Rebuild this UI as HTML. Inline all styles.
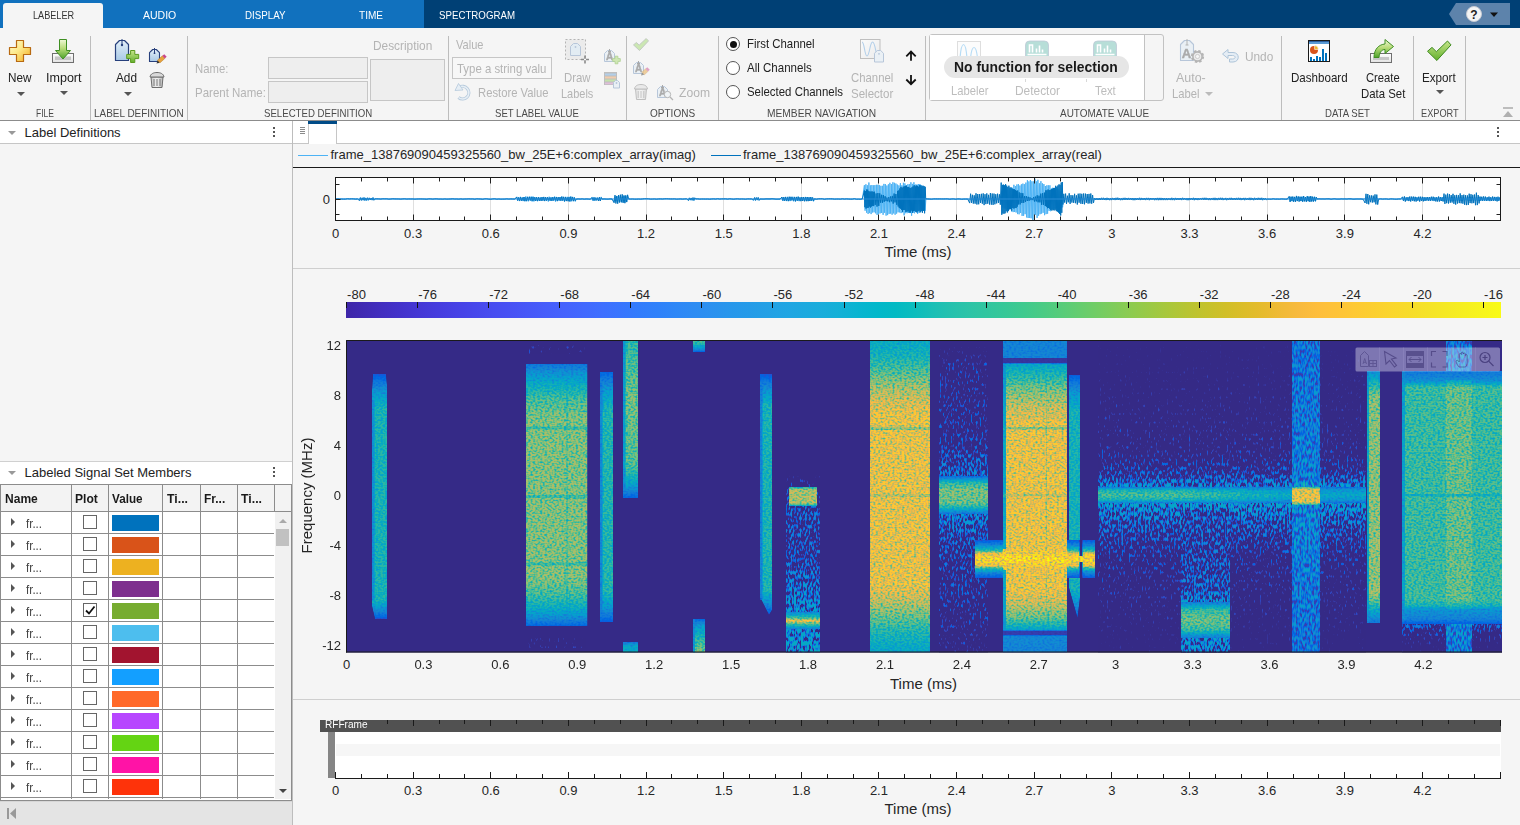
<!DOCTYPE html>
<html><head><meta charset="utf-8"><title>Signal Labeler</title>
<style>
html,body{margin:0;padding:0}
body{width:1520px;height:825px;overflow:hidden;position:relative;background:#f5f5f5;font-family:"Liberation Sans",sans-serif}
</style></head><body>
<div style="position:absolute;left:0px;top:0px;width:1520px;height:28px;background:#004075"></div>
<div style="position:absolute;left:0px;top:0px;width:424px;height:28px;background:#1171be"></div>
<div style="position:absolute;left:3px;top:3px;width:100px;height:25px;background:#f5f5f5;border-radius:3px 3px 0 0"></div>
<div style="position:absolute;top:8.0px;height:15px;line-height:15px;font-size:11px;color:#333;white-space:nowrap;left:32.6px;transform:scaleX(0.831);transform-origin:0 50%;">LABELER</div>
<div style="position:absolute;top:8.0px;height:15px;line-height:15px;font-size:11px;color:#fff;white-space:nowrap;left:142.7px;transform:scaleX(0.956);transform-origin:0 50%;">AUDIO</div>
<div style="position:absolute;top:8.0px;height:15px;line-height:15px;font-size:11px;color:#fff;white-space:nowrap;left:245.0px;transform:scaleX(0.886);transform-origin:0 50%;">DISPLAY</div>
<div style="position:absolute;top:8.0px;height:15px;line-height:15px;font-size:11px;color:#fff;white-space:nowrap;left:359.2px;transform:scaleX(0.913);transform-origin:0 50%;">TIME</div>
<div style="position:absolute;top:8.0px;height:15px;line-height:15px;font-size:11px;color:#fff;white-space:nowrap;left:439.0px;transform:scaleX(0.882);transform-origin:0 50%;">SPECTROGRAM</div>
<svg style="position:absolute;left:1446px;top:0" width="70" height="28" viewBox="1446 0 70 28"><path d="M1449 14 L1456 3 H1510 V25 H1456 Z" fill="#5d83ab"/><circle cx="1474" cy="14" r="7.5" fill="#f4f4f4" stroke="#c8ccd4" stroke-width="1"/><text x="1474" y="18.5" font-size="12" font-weight="bold" text-anchor="middle" fill="#222" font-family="Liberation Sans">?</text><path d="M1490 12.5 h8 l-4 4.5 z" fill="#111"/></svg>
<div style="position:absolute;left:0px;top:28px;width:1520px;height:92px;background:#f5f5f5"></div>
<div style="position:absolute;left:0px;top:120px;width:1520px;height:1px;background:#8c8c8c"></div>
<div style="position:absolute;left:90px;top:36px;width:1px;height:84px;background:#bdbdbd"></div>
<div style="position:absolute;left:187px;top:36px;width:1px;height:84px;background:#bdbdbd"></div>
<div style="position:absolute;left:448px;top:36px;width:1px;height:84px;background:#bdbdbd"></div>
<div style="position:absolute;left:626px;top:36px;width:1px;height:84px;background:#bdbdbd"></div>
<div style="position:absolute;left:718px;top:36px;width:1px;height:84px;background:#bdbdbd"></div>
<div style="position:absolute;left:925px;top:36px;width:1px;height:84px;background:#bdbdbd"></div>
<div style="position:absolute;left:1281px;top:36px;width:1px;height:84px;background:#bdbdbd"></div>
<div style="position:absolute;left:1413px;top:36px;width:1px;height:84px;background:#bdbdbd"></div>
<div style="position:absolute;left:1465px;top:36px;width:1px;height:84px;background:#bdbdbd"></div>
<div style="position:absolute;left:268px;top:57px;width:100px;height:22px;background:#eeeeee;border:1px solid #c6c6c6;box-sizing:border-box"></div>
<div style="position:absolute;left:268px;top:81px;width:100px;height:22px;background:#eeeeee;border:1px solid #c6c6c6;box-sizing:border-box"></div>
<div style="position:absolute;left:370px;top:59px;width:75px;height:42px;background:#eeeeee;border:1px solid #c6c6c6;box-sizing:border-box"></div>
<div style="position:absolute;left:452px;top:57px;width:100px;height:22px;background:#f7f7f7;border:1px solid #c6c6c6;box-sizing:border-box"></div>
<div style="position:absolute;top:106.0px;height:15px;line-height:15px;font-size:11px;color:#4a4a4a;white-space:nowrap;left:36.0px;transform:scaleX(0.774);transform-origin:0 50%;">FILE</div>
<div style="position:absolute;top:106.0px;height:15px;line-height:15px;font-size:11px;color:#4a4a4a;white-space:nowrap;left:94.2px;transform:scaleX(0.905);transform-origin:0 50%;">LABEL DEFINITION</div>
<div style="position:absolute;top:106.0px;height:15px;line-height:15px;font-size:11px;color:#4a4a4a;white-space:nowrap;left:263.8px;transform:scaleX(0.876);transform-origin:0 50%;">SELECTED DEFINITION</div>
<div style="position:absolute;top:106.0px;height:15px;line-height:15px;font-size:11px;color:#4a4a4a;white-space:nowrap;left:495.3px;transform:scaleX(0.870);transform-origin:0 50%;">SET LABEL VALUE</div>
<div style="position:absolute;top:106.0px;height:15px;line-height:15px;font-size:11px;color:#4a4a4a;white-space:nowrap;left:649.6px;transform:scaleX(0.911);transform-origin:0 50%;">OPTIONS</div>
<div style="position:absolute;top:106.0px;height:15px;line-height:15px;font-size:11px;color:#4a4a4a;white-space:nowrap;left:767.3px;transform:scaleX(0.929);transform-origin:0 50%;">MEMBER NAVIGATION</div>
<div style="position:absolute;top:106.0px;height:15px;line-height:15px;font-size:11px;color:#4a4a4a;white-space:nowrap;left:1059.5px;transform:scaleX(0.905);transform-origin:0 50%;">AUTOMATE VALUE</div>
<div style="position:absolute;top:106.0px;height:15px;line-height:15px;font-size:11px;color:#4a4a4a;white-space:nowrap;left:1325.0px;transform:scaleX(0.872);transform-origin:0 50%;">DATA SET</div>
<div style="position:absolute;top:106.0px;height:15px;line-height:15px;font-size:11px;color:#4a4a4a;white-space:nowrap;left:1420.5px;transform:scaleX(0.837);transform-origin:0 50%;">EXPORT</div>
<div style="position:absolute;top:68.7px;height:17px;line-height:17px;font-size:13px;color:#222;white-space:nowrap;left:8.3px;transform:scaleX(0.903);transform-origin:0 50%;">New</div>
<div style="position:absolute;top:68.7px;height:17px;line-height:17px;font-size:13px;color:#222;white-space:nowrap;left:45.5px;transform:scaleX(0.964);transform-origin:0 50%;">Import</div>
<div style="position:absolute;top:68.7px;height:17px;line-height:17px;font-size:13px;color:#222;white-space:nowrap;left:116.0px;transform:scaleX(0.907);transform-origin:0 50%;">Add</div>
<div style="position:absolute;top:35.2px;height:17px;line-height:17px;font-size:13px;color:#222;white-space:nowrap;left:747.0px;transform:scaleX(0.875);transform-origin:0 50%;">First Channel</div>
<div style="position:absolute;top:59.2px;height:17px;line-height:17px;font-size:13px;color:#222;white-space:nowrap;left:747.0px;transform:scaleX(0.887);transform-origin:0 50%;">All Channels</div>
<div style="position:absolute;top:83.2px;height:17px;line-height:17px;font-size:13px;color:#222;white-space:nowrap;left:747.0px;transform:scaleX(0.879);transform-origin:0 50%;">Selected Channels</div>
<div style="position:absolute;top:68.7px;height:17px;line-height:17px;font-size:13px;color:#222;white-space:nowrap;left:1290.8px;transform:scaleX(0.891);transform-origin:0 50%;">Dashboard</div>
<div style="position:absolute;top:68.7px;height:17px;line-height:17px;font-size:13px;color:#222;white-space:nowrap;left:1365.6px;transform:scaleX(0.863);transform-origin:0 50%;">Create</div>
<div style="position:absolute;top:84.7px;height:17px;line-height:17px;font-size:13px;color:#222;white-space:nowrap;left:1360.7px;transform:scaleX(0.876);transform-origin:0 50%;">Data Set</div>
<div style="position:absolute;top:69.2px;height:17px;line-height:17px;font-size:13px;color:#222;white-space:nowrap;left:1422.3px;transform:scaleX(0.897);transform-origin:0 50%;">Export</div>
<div style="position:absolute;top:59.7px;height:17px;line-height:17px;font-size:13px;color:#b4b4b4;white-space:nowrap;left:194.7px;transform:scaleX(0.870);transform-origin:0 50%;">Name:</div>
<div style="position:absolute;top:83.5px;height:17px;line-height:17px;font-size:13px;color:#b4b4b4;white-space:nowrap;left:194.7px;transform:scaleX(0.884);transform-origin:0 50%;">Parent Name:</div>
<div style="position:absolute;top:37.4px;height:17px;line-height:17px;font-size:13px;color:#b4b4b4;white-space:nowrap;left:373.4px;transform:scaleX(0.912);transform-origin:0 50%;">Description</div>
<div style="position:absolute;top:36.1px;height:17px;line-height:17px;font-size:13px;color:#b4b4b4;white-space:nowrap;left:455.5px;transform:scaleX(0.851);transform-origin:0 50%;">Value</div>
<div style="position:absolute;top:59.7px;height:17px;line-height:17px;font-size:13px;color:#b4b4b4;white-space:nowrap;left:457.4px;transform:scaleX(0.877);transform-origin:0 50%;">Type a string valu</div>
<div style="position:absolute;top:83.7px;height:17px;line-height:17px;font-size:13px;color:#b4b4b4;white-space:nowrap;left:477.5px;transform:scaleX(0.866);transform-origin:0 50%;">Restore Value</div>
<div style="position:absolute;top:68.7px;height:17px;line-height:17px;font-size:13px;color:#b4b4b4;white-space:nowrap;left:564.0px;transform:scaleX(0.877);transform-origin:0 50%;">Draw</div>
<div style="position:absolute;top:84.7px;height:17px;line-height:17px;font-size:13px;color:#b4b4b4;white-space:nowrap;left:561.0px;transform:scaleX(0.843);transform-origin:0 50%;">Labels</div>
<div style="position:absolute;top:83.7px;height:17px;line-height:17px;font-size:13px;color:#b4b4b4;white-space:nowrap;left:678.5px;transform:scaleX(0.933);transform-origin:0 50%;">Zoom</div>
<div style="position:absolute;top:68.7px;height:17px;line-height:17px;font-size:13px;color:#b4b4b4;white-space:nowrap;left:850.7px;transform:scaleX(0.873);transform-origin:0 50%;">Channel</div>
<div style="position:absolute;top:84.7px;height:17px;line-height:17px;font-size:13px;color:#b4b4b4;white-space:nowrap;left:850.7px;transform:scaleX(0.887);transform-origin:0 50%;">Selector</div>
<div style="position:absolute;top:69.2px;height:17px;line-height:17px;font-size:13px;color:#b4b4b4;white-space:nowrap;left:1176.0px;transform:scaleX(0.956);transform-origin:0 50%;">Auto-</div>
<div style="position:absolute;top:84.7px;height:17px;line-height:17px;font-size:13px;color:#b4b4b4;white-space:nowrap;left:1171.5px;transform:scaleX(0.864);transform-origin:0 50%;">Label</div>
<div style="position:absolute;top:48.3px;height:17px;line-height:17px;font-size:13px;color:#b4b4b4;white-space:nowrap;left:1244.7px;transform:scaleX(0.910);transform-origin:0 50%;">Undo</div>
<div style="position:absolute;left:17px;top:92px;width:0;height:0;border-left:4px solid transparent;border-right:4px solid transparent;border-top:4px solid #555"></div>
<div style="position:absolute;left:59.5px;top:91px;width:0;height:0;border-left:4px solid transparent;border-right:4px solid transparent;border-top:4px solid #555"></div>
<div style="position:absolute;left:124px;top:92px;width:0;height:0;border-left:4px solid transparent;border-right:4px solid transparent;border-top:4px solid #555"></div>
<div style="position:absolute;left:1435.5px;top:90px;width:0;height:0;border-left:4px solid transparent;border-right:4px solid transparent;border-top:4px solid #555"></div>
<div style="position:absolute;left:1205px;top:92px;width:0;height:0;border-left:4px solid transparent;border-right:4px solid transparent;border-top:4px solid #bbb"></div>
<div style="position:absolute;left:1150px;top:66px;width:0;height:0;border-left:4px solid transparent;border-right:4px solid transparent;border-top:4px solid #555"></div>
<div style="position:absolute;left:726px;top:37px;width:14px;height:14px;background:#fff;border:1px solid #555;border-radius:50%;box-sizing:border-box"></div>
<div style="position:absolute;left:729.5px;top:40.5px;width:7px;height:7px;background:#111;border-radius:50%"></div>
<div style="position:absolute;left:726px;top:61px;width:14px;height:14px;background:#fff;border:1px solid #555;border-radius:50%;box-sizing:border-box"></div>
<div style="position:absolute;left:726px;top:85px;width:14px;height:14px;background:#fff;border:1px solid #555;border-radius:50%;box-sizing:border-box"></div>
<div style="position:absolute;left:929px;top:34px;width:235px;height:67px;background:#f5f5f5;border:1px solid #c2c2c2;border-radius:3px;box-sizing:border-box"></div>
<div style="position:absolute;left:930px;top:35px;width:214px;height:65px;background:#fff;border-right:1px solid #c2c2c2"></div>
<div style="position:absolute;top:81.5px;height:17px;line-height:17px;font-size:13px;color:#bdbdbd;white-space:nowrap;left:950.8px;transform:scaleX(0.864);transform-origin:0 50%;">Labeler</div>
<div style="position:absolute;top:81.5px;height:17px;line-height:17px;font-size:13px;color:#bdbdbd;white-space:nowrap;left:1015.0px;transform:scaleX(0.916);transform-origin:0 50%;">Detector</div>
<div style="position:absolute;top:81.5px;height:17px;line-height:17px;font-size:13px;color:#bdbdbd;white-space:nowrap;left:1095.0px;transform:scaleX(0.868);transform-origin:0 50%;">Text</div>
<svg style="position:absolute;left:930px;top:35px" width="214" height="65" viewBox="930 35 214 65"><g opacity="0.55"><rect x="957.5" y="41.5" width="23" height="22" fill="#fbfbfb" stroke="#c4c4c4"/><path d="M960 58C961.5 40 965.5 40 967 58M970.5 58C972 44 976 44 977.5 58" fill="none" stroke="#7cc0ee" stroke-width="1.2"/></g><g opacity="0.75"><rect x="1025.5" y="41" width="23" height="23" rx="4" fill="#9fd3cc" stroke="#a9b7c9" stroke-width="0.8"/><path d="M1029.5 52.5V45H1032.5V52.5M1036.5 52.5V48.5M1039.5 52.5V45.5M1042.5 52.5V49.5M1027.5 54.5H1046.5" stroke="#fff" stroke-width="1.6" fill="none"/></g><g opacity="0.75"><rect x="1093.5" y="41" width="23" height="23" rx="4" fill="#9fd3cc" stroke="#a9b7c9" stroke-width="0.8"/><path d="M1097.5 52.5V45H1100.5V52.5M1104.5 52.5V48.5M1107.5 52.5V45.5M1110.5 52.5V49.5M1095.5 54.5H1114.5" stroke="#fff" stroke-width="1.6" fill="none"/></g><path d="M1025.5 79V82M1086.5 79V82" stroke="#d8d8d8" stroke-width="1"/></svg>
<div style="position:absolute;left:944px;top:56px;width:185px;height:22px;background:#e6e6e6;border-radius:11px"></div>
<div style="position:absolute;top:58.0px;height:18px;line-height:18px;font-size:14px;color:#1a1a1a;white-space:nowrap;font-weight:bold;left:954.2px;transform:scaleX(0.993);transform-origin:0 50%;">No function for selection</div>
<svg style="position:absolute;left:0;top:28px" width="1520" height="92" viewBox="0 28 1520 92"><defs><linearGradient id="gPlus" x1="0" y1="0" x2="1" y2="1"><stop offset="0" stop-color="#fffbd0"/><stop offset="0.45" stop-color="#fde98a"/><stop offset="1" stop-color="#f2a91c"/></linearGradient><linearGradient id="gArrow" x1="0" y1="0" x2="0" y2="1"><stop offset="0" stop-color="#f0f8d8"/><stop offset="0.45" stop-color="#b9dc7a"/><stop offset="1" stop-color="#4ea32a"/></linearGradient><linearGradient id="gTag" x1="0" y1="0" x2="0" y2="1"><stop offset="0" stop-color="#e2eff9"/><stop offset="1" stop-color="#a9c9e6"/></linearGradient><linearGradient id="gGreen" x1="0" y1="0" x2="0" y2="1"><stop offset="0" stop-color="#c6e58a"/><stop offset="1" stop-color="#63b02c"/></linearGradient><linearGradient id="gTrash" x1="0" y1="0" x2="1" y2="0"><stop offset="0" stop-color="#c9c9c9"/><stop offset="0.5" stop-color="#f2f2f2"/><stop offset="1" stop-color="#b5b5b5"/></linearGradient><linearGradient id="gTray" x1="0" y1="0" x2="0" y2="1"><stop offset="0" stop-color="#ffffff"/><stop offset="1" stop-color="#e2e2e2"/></linearGradient><linearGradient id="gBox" x1="0" y1="0" x2="1" y2="1"><stop offset="0" stop-color="#ffffff"/><stop offset="1" stop-color="#e6e6e6"/></linearGradient></defs><path d="M16.5 40.5H23.5V47.5H30.5V54.5H23.5V61.5H16.5V54.5H9.5V47.5H16.5Z" fill="url(#gPlus)" stroke="#b86a12" stroke-width="1.2" stroke-linejoin="round"/><rect x="52.5" y="53.5" width="21" height="9" fill="url(#gTray)" stroke="#6f6f6f" stroke-width="1"/><rect x="55" y="56.5" width="16" height="3.5" fill="#c6c6c6"/><path d="M59.5 39.5H66.5V50.5H70.5L63 59L55.5 50.5H59.5Z" fill="url(#gArrow)" stroke="#3f8f22" stroke-width="1" stroke-linejoin="round"/><path d="M115.5 60.5V44.5L119.5 40.5H124.5L128.5 44.5V60.5Z" fill="url(#gTag)" stroke="#27407c" stroke-width="1.2" stroke-linejoin="round"/><circle cx="122.0" cy="45.0" r="1.2" fill="#27407c"/><path d="M122.0 39.0V45.0" stroke="#27407c" stroke-width="1"/><path d="M130.6 50.5H134.79999999999998V54.4H138.7V58.6H134.79999999999998V62.5H130.6V58.6H126.69999999999999V54.4H130.6Z" fill="url(#gGreen)" stroke="#5a9a1e" stroke-width="1" stroke-linejoin="round"/><path d="M149.5 61.5V52.7L152.7 49.5H156.3L159.5 52.7V61.5Z" fill="url(#gTag)" stroke="#27407c" stroke-width="1.1" stroke-linejoin="round"/><circle cx="154.5" cy="53.2" r="0.9" fill="#27407c"/><path d="M154.5 48.0V53.2" stroke="#27407c" stroke-width="1"/><g transform="translate(156.5 63.5) rotate(-41.6335393365702)" opacity="1.0"><path d="M0 0L3 -1.8V1.8Z" fill="#3a3a3a"/><rect x="3" y="-1.8" width="6.5" height="3.6" fill="#e8a33d" stroke="#b9791f" stroke-width="0.5"/><rect x="9.5" y="-1.8" width="2.5" height="3.6" fill="#c9478a"/></g><g opacity="1.0"><path d="M151.0 77L152.0 87.5H162.0L163.0 77Z" fill="url(#gTrash)" stroke="#6e6e6e" stroke-width="1"/><path d="M154.0 79V86" stroke="#777" stroke-width="1"/><path d="M157.0 79V86" stroke="#777" stroke-width="1"/><path d="M160.0 79V86" stroke="#777" stroke-width="1"/><path d="M150.0 77C150.5 73.5,154.0 72.5,157.0 72.5C160.0 72.5,163.5 73.5,164.0 77Z" fill="#d9d9d9" stroke="#6e6e6e" stroke-width="1"/></g><g opacity="0.55"><path d="M459 87.5A6.3 6.3 0 1 1 458.5 97.5" fill="none" stroke="#7fa4c6" stroke-width="3.2"/><path d="M459 87.5A6.3 6.3 0 1 1 458.5 97.5" fill="none" stroke="#dbe9f5" stroke-width="1.6"/><path d="M455 90.5L458.5 83.5L463 90Z" fill="#dbe9f5" stroke="#7fa4c6" stroke-width="0.8"/></g><g opacity="0.6"><rect x="565.5" y="39.5" width="20" height="20" fill="#e6e6e6" stroke="#8a8a8a" stroke-width="1" stroke-dasharray="2 2"/><path d="M570.5 55.5V46.5L573.5 43.5H577.5L580.5 46.5V55.5Z" fill="#d7e7f3" stroke="#8fa8c8" stroke-width="1" stroke-linejoin="round"/><circle cx="575.5" cy="47.0" r="0.9" fill="#8fa8c8"/><path d="M581 59.5H589M585 55.5V63.5" stroke="#444" stroke-width="1.6"/><path d="M584 59.5h2M585 58.5v2" stroke="#fff" stroke-width="1"/></g><g opacity="0.6"><path d="M604.5 61.5V53.5L607.5 50.5H611.5L614.5 53.5V61.5Z" fill="#e3eef6" stroke="#8fa8c8" stroke-width="1" stroke-linejoin="round"/><path d="M609.5 49.0V51.5" stroke="#777" stroke-width="1"/><path d="M608.0 51.5H611.0" stroke="#777" stroke-width="1"/><text x="609.5" y="59.5" font-size="10" font-weight="bold" text-anchor="middle" fill="#7a7a7a" stroke="#7a7a7a" stroke-width="0.4" font-family="Liberation Sans">A</text><path d="M615.1 56.2H617.9V58.6H620.3V61.4H617.9V63.8H615.1V61.4H612.7V58.6H615.1Z" fill="#b7df8a" stroke="#7fb84f" stroke-width="0.8" stroke-linejoin="round"/></g><g opacity="0.6"><rect x="604" y="72" width="13" height="13" fill="#9a9a9a"/><rect x="605" y="73.5" width="11" height="2" fill="#86b6e2"/><rect x="605" y="76.5" width="11" height="2" fill="#f0b27a"/><rect x="605" y="79.5" width="11" height="2" fill="#a4d77c"/><rect x="605" y="82.5" width="11" height="1.8" fill="#d39ac8"/><path d="M613.5 88V82.5L615.5 80.5H617.5L619.5 82.5V88Z" fill="#e3eef6" stroke="#8fa8c8" stroke-width="1" stroke-linejoin="round"/><circle cx="616.5" cy="83.0" r="0.9" fill="#8fa8c8"/></g><path d="M633.5 44.9L636.4 42.5L639.2 45.1L646.2 38.5L648.5 40.9L639.5 50.5Z" fill="#a9dc7c" stroke="#9aa69a" stroke-width="1" stroke-linejoin="round" opacity="0.55"/><g opacity="0.6"><path d="M633.5 73.5V65.5L636.5 62.5H640.5L643.5 65.5V73.5Z" fill="#e3eef6" stroke="#8fa8c8" stroke-width="1" stroke-linejoin="round"/><path d="M638.5 61.0V63.5" stroke="#777" stroke-width="1"/><path d="M637.0 63.5H640.0" stroke="#777" stroke-width="1"/><text x="638.5" y="71.5" font-size="10" font-weight="bold" text-anchor="middle" fill="#7a7a7a" stroke="#7a7a7a" stroke-width="0.4" font-family="Liberation Sans">A</text><g transform="translate(641 75.5) rotate(-43.025065989118026)" opacity="0.8"><path d="M0 0L3 -1.8V1.8Z" fill="#3a3a3a"/><rect x="3" y="-1.8" width="4.8" height="3.6" fill="#e8a33d" stroke="#b9791f" stroke-width="0.5"/><rect x="7.8" y="-1.8" width="2.5" height="3.6" fill="#c9478a"/></g></g><g opacity="0.4"><path d="M635.5 89L636.5 99.5H645.5L646.5 89Z" fill="url(#gTrash)" stroke="#6e6e6e" stroke-width="1"/><path d="M638.2 91V98" stroke="#777" stroke-width="1"/><path d="M641.0 91V98" stroke="#777" stroke-width="1"/><path d="M643.8 91V98" stroke="#777" stroke-width="1"/><path d="M634.5 89C635 85.5,638.0 84.5,641.0 84.5C644.0 84.5,647 85.5,647.5 89Z" fill="#d9d9d9" stroke="#6e6e6e" stroke-width="1"/></g><g opacity="0.6"><path d="M657.5 97.5V89.5L660.5 86.5H664.5L667.5 89.5V97.5Z" fill="#e3eef6" stroke="#8fa8c8" stroke-width="1" stroke-linejoin="round"/><path d="M662.5 85.0V87.5" stroke="#777" stroke-width="1"/><path d="M661.0 87.5H664.0" stroke="#777" stroke-width="1"/><text x="662.5" y="95.5" font-size="10" font-weight="bold" text-anchor="middle" fill="#7a7a7a" stroke="#7a7a7a" stroke-width="0.4" font-family="Liberation Sans">A</text><circle cx="667.5" cy="94.5" r="3.2" fill="#eef4f8" stroke="#8a8a8a" stroke-width="1"/><path d="M670 97L673 100" stroke="#8a8a8a" stroke-width="1.3"/></g><g opacity="0.6"><rect x="860.5" y="39.5" width="19.5" height="19" fill="url(#gBox)" stroke="#9c9c9c" stroke-width="1"/><path d="M862 42C864.5 42 864.5 56 867 56C869.5 56 870 42 872.5 42C875 42 875.5 52 877 55" fill="none" stroke="#86b6e2" stroke-width="1.1"/><path d="M874.5 62V53.3L877.3 50.5H880.7L883.5 53.3V62Z" fill="#e3eef6" stroke="#8fa8c8" stroke-width="1" stroke-linejoin="round"/><circle cx="879.0" cy="53.8" r="0.9" fill="#8fa8c8"/></g><path d="M911 60.8V52M906.3 56.3L911 51.6L915.7 56.3" fill="none" stroke="#111" stroke-width="1.8"/><path d="M911 75V83.8M906.3 79.5L911 84.2L915.7 79.5" fill="none" stroke="#111" stroke-width="1.8"/><g opacity="0.6"><path d="M1180.5 60.5V44.5L1184.5 40.5H1189.5L1193.5 44.5V60.5Z" fill="#e3eef6" stroke="#8fa8c8" stroke-width="1.1" stroke-linejoin="round"/><path d="M1187.0 39.0V45.0" stroke="#888" stroke-width="1"/><path d="M1185.5 45.0H1188.5" stroke="#888" stroke-width="1"/><text x="1186.5" y="58" font-size="13" font-weight="bold" text-anchor="middle" fill="#7a7a7a" stroke="#7a7a7a" stroke-width="0.4" font-family="Liberation Sans">A</text><circle cx="1197.5" cy="56.5" r="5.2" fill="#f2f2f2" stroke="#8a8a8a" stroke-width="2.8" stroke-dasharray="2.3 1.8"/><circle cx="1197.5" cy="56.5" r="4.6" fill="#e9e9e9" stroke="#8a8a8a" stroke-width="1.6"/><circle cx="1197.5" cy="56.5" r="2.1" fill="#f7f7f7" stroke="#999" stroke-width="0.7"/></g><g opacity="0.6"><path d="M1222.5 54L1228 49.5V52.5H1233C1240 52.5 1240 62 1233 62H1229.5V59H1232.5C1236 59 1236 55.5 1232.5 55.5H1228V58.5Z" fill="#dbe9f5" stroke="#7fa4c6" stroke-width="1" stroke-linejoin="round"/></g><rect x="1308.5" y="40.5" width="21" height="21" fill="#fff" stroke="#1a1a1a" stroke-width="1"/><rect x="1309" y="41" width="20" height="3" fill="#5b9bd5"/><rect x="1309" y="41" width="20" height="1" fill="#2c5f9e"/><circle cx="1314" cy="50" r="4" fill="#d95319"/><path d="M1314.6 49.4V45.6A3.8 3.8 0 0 1 1318.4 49.4Z" fill="#edb120" stroke="#fff" stroke-width="0.6"/><rect x="1310" y="57" width="2" height="4" fill="#0072bd"/><rect x="1313" y="59" width="2" height="2" fill="#0072bd"/><rect x="1316" y="56" width="2" height="5" fill="#0072bd"/><rect x="1319" y="57" width="2" height="4" fill="#0072bd"/><rect x="1322" y="49" width="2" height="12" fill="#0072bd"/><rect x="1325" y="53" width="2" height="8" fill="#0072bd"/><rect x="1370.5" y="53.5" width="21" height="9" fill="url(#gTray)" stroke="#6f6f6f" stroke-width="1"/><rect x="1373" y="57" width="16" height="3" fill="#c6c6c6"/><path d="M1374 57.5C1374 49 1379 44.5 1385 44V39.5L1393.5 46.5L1385 53.5V49.5C1381.5 49.5 1379.5 52.5 1379 57.5Z" fill="url(#gArrow)" stroke="#3f8f22" stroke-width="1" stroke-linejoin="round"/><path d="M1427.5 51.3L1432.0 47.4L1436.4 51.7L1447.5 41.0L1451.0 44.9L1436.9 60.5Z" fill="url(#gGreen)" stroke="#3d8a1e" stroke-width="1" stroke-linejoin="round" opacity="1.0"/><path d="M1503 108H1513" stroke="#b0b0b0" stroke-width="1.6"/><path d="M1503 117L1508 111L1513 117Z" fill="#b0b0b0"/></svg>
<div style="position:absolute;left:0px;top:121px;width:292px;height:704px;background:#f5f5f5"></div>
<div style="position:absolute;left:292px;top:121px;width:1px;height:704px;background:#bdbdbd"></div>
<div style="position:absolute;left:0px;top:121px;width:292px;height:22px;background:#fff"></div>
<div style="position:absolute;left:0px;top:143px;width:292px;height:1px;background:#c6c6c6"></div>
<div style="position:absolute;top:124.0px;height:17px;line-height:17px;font-size:13px;color:#222;white-space:nowrap;left:24.5px;">Label Definitions</div>
<div style="position:absolute;left:8px;top:131px;width:0;height:0;border-left:4px solid transparent;border-right:4px solid transparent;border-top:4px solid #999"></div>
<div style="position:absolute;left:273px;top:127px;width:2px;height:2px;background:#555"></div>
<div style="position:absolute;left:273px;top:131px;width:2px;height:2px;background:#555"></div>
<div style="position:absolute;left:273px;top:135px;width:2px;height:2px;background:#555"></div>
<div style="position:absolute;left:0px;top:461px;width:292px;height:1px;background:#d0d0d0"></div>
<div style="position:absolute;left:0px;top:462px;width:292px;height:22px;background:#fff"></div>
<div style="position:absolute;top:464.0px;height:17px;line-height:17px;font-size:13px;color:#222;white-space:nowrap;left:24.5px;">Labeled Signal Set Members</div>
<div style="position:absolute;left:8px;top:471px;width:0;height:0;border-left:4px solid transparent;border-right:4px solid transparent;border-top:4px solid #999"></div>
<div style="position:absolute;left:273px;top:467px;width:2px;height:2px;background:#555"></div>
<div style="position:absolute;left:273px;top:471px;width:2px;height:2px;background:#555"></div>
<div style="position:absolute;left:273px;top:475px;width:2px;height:2px;background:#555"></div>
<div style="position:absolute;left:0px;top:484px;width:292px;height:317px;background:#fff"></div>
<div style="position:absolute;left:0px;top:484px;width:292px;height:1px;background:#8c8c8c"></div>
<div style="position:absolute;left:1px;top:485px;width:290px;height:26px;background:#f3f3f3"></div>
<div style="position:absolute;left:0px;top:511px;width:292px;height:1px;background:#8c8c8c"></div>
<div style="position:absolute;left:0px;top:484px;width:1px;height:316px;background:#8c8c8c"></div>
<div style="position:absolute;left:71px;top:484px;width:1px;height:315px;background:#8c8c8c"></div>
<div style="position:absolute;left:108px;top:484px;width:1px;height:315px;background:#8c8c8c"></div>
<div style="position:absolute;left:162px;top:484px;width:1px;height:315px;background:#8c8c8c"></div>
<div style="position:absolute;left:200px;top:484px;width:1px;height:315px;background:#8c8c8c"></div>
<div style="position:absolute;left:237px;top:484px;width:1px;height:315px;background:#8c8c8c"></div>
<div style="position:absolute;left:274px;top:484px;width:1px;height:27px;background:#8c8c8c"></div>
<div style="position:absolute;left:291px;top:484px;width:1px;height:316px;background:#8c8c8c"></div>
<div style="position:absolute;top:490.0px;height:17px;line-height:17px;font-size:13px;color:#1a1a1a;white-space:nowrap;font-weight:bold;left:4.5px;transform:scaleX(0.926);transform-origin:0 50%;">Name</div>
<div style="position:absolute;top:490.0px;height:17px;line-height:17px;font-size:13px;color:#1a1a1a;white-space:nowrap;font-weight:bold;left:75.2px;transform:scaleX(0.929);transform-origin:0 50%;">Plot</div>
<div style="position:absolute;top:490.0px;height:17px;line-height:17px;font-size:13px;color:#1a1a1a;white-space:nowrap;font-weight:bold;left:112.0px;transform:scaleX(0.898);transform-origin:0 50%;">Value</div>
<div style="position:absolute;top:490.0px;height:17px;line-height:17px;font-size:13px;color:#1a1a1a;white-space:nowrap;font-weight:bold;left:166.5px;transform:scaleX(0.948);transform-origin:0 50%;">Ti...</div>
<div style="position:absolute;top:490.0px;height:17px;line-height:17px;font-size:13px;color:#1a1a1a;white-space:nowrap;font-weight:bold;left:203.8px;transform:scaleX(0.917);transform-origin:0 50%;">Fr...</div>
<div style="position:absolute;top:490.0px;height:17px;line-height:17px;font-size:13px;color:#1a1a1a;white-space:nowrap;font-weight:bold;left:241.0px;transform:scaleX(0.948);transform-origin:0 50%;">Ti...</div>
<div style="position:absolute;left:0px;top:533px;width:274px;height:1px;background:#8c8c8c"></div>
<div style="position:absolute;left:11px;top:518px;width:0;height:0;border-top:4px solid transparent;border-bottom:4px solid transparent;border-left:4px solid #555"></div>
<div style="position:absolute;top:515.0px;height:17px;line-height:17px;font-size:13px;color:#444;white-space:nowrap;left:25.5px;transform:scaleX(0.887);transform-origin:0 50%;">fr...</div>
<div style="position:absolute;left:83px;top:515px;width:14px;height:14px;background:#fff;border:1px solid #666;box-sizing:border-box"></div>
<div style="position:absolute;left:112px;top:515px;width:47px;height:16px;background:#0072BD"></div>
<div style="position:absolute;left:0px;top:555px;width:274px;height:1px;background:#8c8c8c"></div>
<div style="position:absolute;left:11px;top:540px;width:0;height:0;border-top:4px solid transparent;border-bottom:4px solid transparent;border-left:4px solid #555"></div>
<div style="position:absolute;top:537.0px;height:17px;line-height:17px;font-size:13px;color:#444;white-space:nowrap;left:25.5px;transform:scaleX(0.887);transform-origin:0 50%;">fr...</div>
<div style="position:absolute;left:83px;top:537px;width:14px;height:14px;background:#fff;border:1px solid #666;box-sizing:border-box"></div>
<div style="position:absolute;left:112px;top:537px;width:47px;height:16px;background:#D95319"></div>
<div style="position:absolute;left:0px;top:577px;width:274px;height:1px;background:#8c8c8c"></div>
<div style="position:absolute;left:11px;top:562px;width:0;height:0;border-top:4px solid transparent;border-bottom:4px solid transparent;border-left:4px solid #555"></div>
<div style="position:absolute;top:559.0px;height:17px;line-height:17px;font-size:13px;color:#444;white-space:nowrap;left:25.5px;transform:scaleX(0.887);transform-origin:0 50%;">fr...</div>
<div style="position:absolute;left:83px;top:559px;width:14px;height:14px;background:#fff;border:1px solid #666;box-sizing:border-box"></div>
<div style="position:absolute;left:112px;top:559px;width:47px;height:16px;background:#EDB120"></div>
<div style="position:absolute;left:0px;top:599px;width:274px;height:1px;background:#8c8c8c"></div>
<div style="position:absolute;left:11px;top:584px;width:0;height:0;border-top:4px solid transparent;border-bottom:4px solid transparent;border-left:4px solid #555"></div>
<div style="position:absolute;top:581.0px;height:17px;line-height:17px;font-size:13px;color:#444;white-space:nowrap;left:25.5px;transform:scaleX(0.887);transform-origin:0 50%;">fr...</div>
<div style="position:absolute;left:83px;top:581px;width:14px;height:14px;background:#fff;border:1px solid #666;box-sizing:border-box"></div>
<div style="position:absolute;left:112px;top:581px;width:47px;height:16px;background:#7E2F8E"></div>
<div style="position:absolute;left:0px;top:621px;width:274px;height:1px;background:#8c8c8c"></div>
<div style="position:absolute;left:11px;top:606px;width:0;height:0;border-top:4px solid transparent;border-bottom:4px solid transparent;border-left:4px solid #555"></div>
<div style="position:absolute;top:603.0px;height:17px;line-height:17px;font-size:13px;color:#444;white-space:nowrap;left:25.5px;transform:scaleX(0.887);transform-origin:0 50%;">fr...</div>
<div style="position:absolute;left:83px;top:603px;width:14px;height:14px;background:#fff;border:1px solid #666;box-sizing:border-box"></div>
<svg style="position:absolute;left:83px;top:603px" width="14" height="14"><path d="M3 7.5 L6 10.5 L11.5 3.5" stroke="#111" stroke-width="1.8" fill="none"/></svg>
<div style="position:absolute;left:112px;top:603px;width:47px;height:16px;background:#77AC30"></div>
<div style="position:absolute;left:0px;top:643px;width:274px;height:1px;background:#8c8c8c"></div>
<div style="position:absolute;left:11px;top:628px;width:0;height:0;border-top:4px solid transparent;border-bottom:4px solid transparent;border-left:4px solid #555"></div>
<div style="position:absolute;top:625.0px;height:17px;line-height:17px;font-size:13px;color:#444;white-space:nowrap;left:25.5px;transform:scaleX(0.887);transform-origin:0 50%;">fr...</div>
<div style="position:absolute;left:83px;top:625px;width:14px;height:14px;background:#fff;border:1px solid #666;box-sizing:border-box"></div>
<div style="position:absolute;left:112px;top:625px;width:47px;height:16px;background:#4DBEEE"></div>
<div style="position:absolute;left:0px;top:665px;width:274px;height:1px;background:#8c8c8c"></div>
<div style="position:absolute;left:11px;top:650px;width:0;height:0;border-top:4px solid transparent;border-bottom:4px solid transparent;border-left:4px solid #555"></div>
<div style="position:absolute;top:647.0px;height:17px;line-height:17px;font-size:13px;color:#444;white-space:nowrap;left:25.5px;transform:scaleX(0.887);transform-origin:0 50%;">fr...</div>
<div style="position:absolute;left:83px;top:647px;width:14px;height:14px;background:#fff;border:1px solid #666;box-sizing:border-box"></div>
<div style="position:absolute;left:112px;top:647px;width:47px;height:16px;background:#A2142F"></div>
<div style="position:absolute;left:0px;top:687px;width:274px;height:1px;background:#8c8c8c"></div>
<div style="position:absolute;left:11px;top:672px;width:0;height:0;border-top:4px solid transparent;border-bottom:4px solid transparent;border-left:4px solid #555"></div>
<div style="position:absolute;top:669.0px;height:17px;line-height:17px;font-size:13px;color:#444;white-space:nowrap;left:25.5px;transform:scaleX(0.887);transform-origin:0 50%;">fr...</div>
<div style="position:absolute;left:83px;top:669px;width:14px;height:14px;background:#fff;border:1px solid #666;box-sizing:border-box"></div>
<div style="position:absolute;left:112px;top:669px;width:47px;height:16px;background:#139FFF"></div>
<div style="position:absolute;left:0px;top:709px;width:274px;height:1px;background:#8c8c8c"></div>
<div style="position:absolute;left:11px;top:694px;width:0;height:0;border-top:4px solid transparent;border-bottom:4px solid transparent;border-left:4px solid #555"></div>
<div style="position:absolute;top:691.0px;height:17px;line-height:17px;font-size:13px;color:#444;white-space:nowrap;left:25.5px;transform:scaleX(0.887);transform-origin:0 50%;">fr...</div>
<div style="position:absolute;left:83px;top:691px;width:14px;height:14px;background:#fff;border:1px solid #666;box-sizing:border-box"></div>
<div style="position:absolute;left:112px;top:691px;width:47px;height:16px;background:#FF6929"></div>
<div style="position:absolute;left:0px;top:731px;width:274px;height:1px;background:#8c8c8c"></div>
<div style="position:absolute;left:11px;top:716px;width:0;height:0;border-top:4px solid transparent;border-bottom:4px solid transparent;border-left:4px solid #555"></div>
<div style="position:absolute;top:713.0px;height:17px;line-height:17px;font-size:13px;color:#444;white-space:nowrap;left:25.5px;transform:scaleX(0.887);transform-origin:0 50%;">fr...</div>
<div style="position:absolute;left:83px;top:713px;width:14px;height:14px;background:#fff;border:1px solid #666;box-sizing:border-box"></div>
<div style="position:absolute;left:112px;top:713px;width:47px;height:16px;background:#B746FF"></div>
<div style="position:absolute;left:0px;top:753px;width:274px;height:1px;background:#8c8c8c"></div>
<div style="position:absolute;left:11px;top:738px;width:0;height:0;border-top:4px solid transparent;border-bottom:4px solid transparent;border-left:4px solid #555"></div>
<div style="position:absolute;top:735.0px;height:17px;line-height:17px;font-size:13px;color:#444;white-space:nowrap;left:25.5px;transform:scaleX(0.887);transform-origin:0 50%;">fr...</div>
<div style="position:absolute;left:83px;top:735px;width:14px;height:14px;background:#fff;border:1px solid #666;box-sizing:border-box"></div>
<div style="position:absolute;left:112px;top:735px;width:47px;height:16px;background:#64D413"></div>
<div style="position:absolute;left:0px;top:775px;width:274px;height:1px;background:#8c8c8c"></div>
<div style="position:absolute;left:11px;top:760px;width:0;height:0;border-top:4px solid transparent;border-bottom:4px solid transparent;border-left:4px solid #555"></div>
<div style="position:absolute;top:757.0px;height:17px;line-height:17px;font-size:13px;color:#444;white-space:nowrap;left:25.5px;transform:scaleX(0.887);transform-origin:0 50%;">fr...</div>
<div style="position:absolute;left:83px;top:757px;width:14px;height:14px;background:#fff;border:1px solid #666;box-sizing:border-box"></div>
<div style="position:absolute;left:112px;top:757px;width:47px;height:16px;background:#FF13A6"></div>
<div style="position:absolute;left:0px;top:797px;width:274px;height:1px;background:#8c8c8c"></div>
<div style="position:absolute;left:11px;top:782px;width:0;height:0;border-top:4px solid transparent;border-bottom:4px solid transparent;border-left:4px solid #555"></div>
<div style="position:absolute;top:779.0px;height:17px;line-height:17px;font-size:13px;color:#444;white-space:nowrap;left:25.5px;transform:scaleX(0.887);transform-origin:0 50%;">fr...</div>
<div style="position:absolute;left:83px;top:779px;width:14px;height:14px;background:#fff;border:1px solid #666;box-sizing:border-box"></div>
<div style="position:absolute;left:112px;top:779px;width:47px;height:16px;background:#FE330A"></div>
<div style="position:absolute;left:275px;top:512px;width:16px;height:287px;background:#f1f1f1"></div>
<div style="position:absolute;left:279px;top:519px;width:0;height:0;border-left:4px solid transparent;border-right:4px solid transparent;border-bottom:4px solid #aaa"></div>
<div style="position:absolute;left:279px;top:789px;width:0;height:0;border-left:4px solid transparent;border-right:4px solid transparent;border-top:4px solid #444"></div>
<div style="position:absolute;left:276px;top:529px;width:13px;height:17px;background:#c1c1c1"></div>
<div style="position:absolute;left:0px;top:800px;width:292px;height:1px;background:#8c8c8c"></div>
<div style="position:absolute;left:0px;top:801px;width:292px;height:24px;background:#e4e4e4;border-top:1px solid #d6d6d6;box-sizing:border-box"></div>
<svg style="position:absolute;left:6px;top:807px" width="12" height="13"><rect x="1" y="1" width="2" height="11" fill="#999"/><path d="M10 1 L4 6.5 L10 12 Z" fill="#999"/></svg>
<div style="position:absolute;left:293px;top:121px;width:1227px;height:704px;background:#f5f5f5"></div>
<div style="position:absolute;left:293px;top:121px;width:1227px;height:22px;background:#fff"></div>
<div style="position:absolute;left:293px;top:143px;width:1227px;height:1px;background:#c6c6c6"></div>
<div style="position:absolute;left:308px;top:121px;width:29px;height:23px;background:#fff;border-left:1px solid #c6c6c6;border-right:1px solid #c6c6c6;box-sizing:border-box"></div>
<div style="position:absolute;left:308px;top:121px;width:29px;height:3px;background:#004b87"></div>
<div style="position:absolute;left:300px;top:127px;width:5px;height:1px;background:#8a8a8a"></div>
<div style="position:absolute;left:300px;top:129px;width:5px;height:1px;background:#8a8a8a"></div>
<div style="position:absolute;left:300px;top:131px;width:5px;height:1px;background:#8a8a8a"></div>
<div style="position:absolute;left:300px;top:133px;width:5px;height:1px;background:#8a8a8a"></div>
<div style="position:absolute;left:1497px;top:127px;width:2px;height:2px;background:#555"></div>
<div style="position:absolute;left:1497px;top:131px;width:2px;height:2px;background:#555"></div>
<div style="position:absolute;left:1497px;top:135px;width:2px;height:2px;background:#555"></div>
<div style="position:absolute;left:298px;top:155px;width:30px;height:1px;background:#4db3f5"></div>
<div style="position:absolute;top:145.8px;height:17px;line-height:17px;font-size:13px;color:#262626;white-space:nowrap;left:330.5px;">frame_138769090459325560_bw_25E+6:complex_array(imag)</div>
<div style="position:absolute;left:711px;top:155px;width:30px;height:1px;background:#0072bd"></div>
<div style="position:absolute;top:145.8px;height:17px;line-height:17px;font-size:13px;color:#262626;white-space:nowrap;left:743.0px;">frame_138769090459325560_bw_25E+6:complex_array(real)</div>
<div style="position:absolute;left:293px;top:167px;width:1227px;height:1px;background:#1a1a1a"></div>
<div style="position:absolute;left:293px;top:268px;width:1227px;height:1px;background:#cfcfcf"></div>
<div style="position:absolute;left:293px;top:699px;width:1227px;height:1px;background:#cfcfcf"></div>
<svg style="position:absolute;left:293px;top:168px" width="1227" height="100" viewBox="293 168 1227 100"><rect x="335.5" y="177.5" width="1165.0" height="43.0" fill="#fff"/><path d="M413.5 177.5V220.5" stroke="#dfdfdf" stroke-width="1"/><path d="M490.5 177.5V220.5" stroke="#dfdfdf" stroke-width="1"/><path d="M568.5 177.5V220.5" stroke="#dfdfdf" stroke-width="1"/><path d="M646.5 177.5V220.5" stroke="#dfdfdf" stroke-width="1"/><path d="M723.5 177.5V220.5" stroke="#dfdfdf" stroke-width="1"/><path d="M801.5 177.5V220.5" stroke="#dfdfdf" stroke-width="1"/><path d="M878.5 177.5V220.5" stroke="#dfdfdf" stroke-width="1"/><path d="M956.5 177.5V220.5" stroke="#dfdfdf" stroke-width="1"/><path d="M1034.5 177.5V220.5" stroke="#dfdfdf" stroke-width="1"/><path d="M1111.5 177.5V220.5" stroke="#dfdfdf" stroke-width="1"/><path d="M1189.5 177.5V220.5" stroke="#dfdfdf" stroke-width="1"/><path d="M1267.5 177.5V220.5" stroke="#dfdfdf" stroke-width="1"/><path d="M1344.5 177.5V220.5" stroke="#dfdfdf" stroke-width="1"/><path d="M1422.5 177.5V220.5" stroke="#dfdfdf" stroke-width="1"/><path d="M335.5 198.9L337.5 198.8L339.5 199.1L341.5 198.7L343.5 199.0L345.5 198.9L347.5 198.7L349.5 199.0L351.5 198.7L353.5 199.0L355.5 198.7L357.5 198.8L359.5 200.2L360.4 197.5L361.3 200.0L362.2 197.9L363.1 200.3L364.0 197.5L364.9 200.3L365.8 197.8L366.7 200.6L367.6 198.1L368.5 200.5L369.4 197.9L370.3 200.0L371.2 198.0L372.1 200.1L373.0 197.5L373.9 200.0L374.8 199.0L376.8 199.1L378.8 198.9L380.8 199.0L382.8 198.7L384.8 198.7L386.8 198.8L388.8 199.1L390.8 199.0L392.8 198.9L394.8 199.1L396.8 199.0L398.8 198.9L400.8 199.2L402.8 199.1L404.8 198.8L406.8 199.0L408.8 199.0L410.8 199.2L412.8 199.1L414.8 198.9L416.8 199.3L418.8 198.8L420.8 199.0L422.8 199.2L424.8 198.8L426.8 199.0L428.8 198.7L430.8 199.1L432.8 199.2L434.8 199.0L436.8 199.2L438.8 198.9L440.8 199.1L442.8 199.1L444.8 199.0L446.8 199.0L448.8 199.2L450.8 199.3L452.8 199.0L454.8 199.1L456.8 198.7L458.8 199.1L460.8 199.1L462.8 199.3L464.8 199.2L466.8 198.9L468.8 198.9L470.8 199.1L472.8 198.7L474.8 199.0L476.8 198.8L478.8 198.8L480.8 198.7L482.8 199.2L484.8 198.8L486.8 198.8L488.8 198.9L490.8 199.2L492.8 198.7L494.8 199.0L496.8 199.0L498.8 199.2L500.8 199.2L502.8 199.2L504.8 198.9L506.8 198.9L508.8 198.9L510.8 199.2L512.8 199.3L514.8 198.8L516.8 197.2L517.7 200.8L518.6 197.2L519.5 201.1L520.4 196.8L521.3 200.9L522.2 197.4L523.1 201.1L524.0 197.0L524.9 201.2L525.8 196.3L526.7 201.4L527.6 196.8L528.5 201.3L529.4 196.6L530.3 200.6L531.2 196.4L532.1 201.5L533.0 196.4L533.9 201.5L534.8 197.0L535.7 201.0L536.6 197.3L537.5 201.3L538.4 197.4L539.3 200.6L540.2 197.2L541.1 200.7L542.0 197.0L542.9 200.6L543.8 197.4L544.7 200.7L545.6 197.3L546.5 201.0L547.4 197.4L548.3 201.6L549.2 196.7L550.1 200.7L551.0 197.1L551.9 201.0L552.8 197.0L553.7 200.7L554.6 196.4L555.5 201.7L556.4 196.9L557.3 201.1L558.2 197.3L559.1 200.7L560.0 197.0L560.9 200.9L561.8 196.5L562.7 200.7L563.6 197.4L564.5 201.7L565.4 196.8L566.3 200.7L567.2 196.8L568.1 200.6L569.0 196.8L569.9 201.7L570.8 196.4L571.7 201.4L572.6 197.1L573.5 201.0L574.4 197.2L575.3 201.5L576.2 199.0L578.2 199.2L580.2 198.9L582.2 198.8L584.2 199.2L586.2 199.3L588.2 199.2L590.2 199.2L592.2 197.1L593.1 200.9L594.0 197.6L594.9 200.7L595.8 197.5L596.7 200.2L597.6 197.8L598.5 200.5L599.4 197.6L600.3 200.8L601.2 196.9L602.1 199.0L604.1 199.3L606.1 199.3L608.1 199.3L610.1 198.9L612.1 198.8L614.1 201.5L615.0 196.6L615.9 201.4L616.8 195.9L617.7 202.5L618.6 195.6L619.5 201.9L620.4 195.9L621.3 202.4L622.2 196.8L623.1 202.1L624.0 195.5L624.9 202.3L625.8 195.7L626.7 201.9L627.6 196.6L628.5 199.2L630.5 198.9L632.5 199.2L634.5 199.3L636.5 198.9L638.5 198.9L640.5 199.3L642.5 199.1L644.5 198.8L646.5 198.8L648.5 198.8L650.5 199.2L652.5 199.2L654.5 198.8L656.5 199.2L658.5 199.3L660.5 199.1L662.5 198.9L664.5 199.0L666.5 198.8L668.5 198.7L670.5 199.3L672.5 199.1L674.5 199.0L676.5 199.3L678.5 199.0L680.5 199.2L682.5 199.2L684.5 198.8L686.5 198.9L688.5 200.1L689.4 197.9L690.3 200.3L691.2 197.9L692.1 200.2L693.0 198.0L693.9 200.5L694.8 197.9L695.7 199.0L697.7 199.1L699.7 199.2L701.7 199.0L703.7 199.3L705.7 199.0L707.7 199.0L709.7 199.0L711.7 198.7L713.7 199.0L715.7 198.8L717.7 198.7L719.7 199.2L721.7 198.8L723.7 199.0L725.7 199.1L727.7 199.0L729.7 198.9L731.7 199.0L733.7 199.0L735.7 199.2L737.7 198.8L739.7 199.0L741.7 198.8L743.7 198.9L745.7 199.2L747.7 199.0L749.7 199.0L751.7 199.2L753.7 200.5L754.6 197.8L755.5 200.3L756.4 197.8L757.3 200.2L758.2 197.6L759.1 200.2L760.0 199.0L762.0 199.0L764.0 199.3L766.0 199.1L768.0 199.2L770.0 199.3L772.0 198.9L774.0 199.0L776.0 199.3L778.0 199.2L780.0 198.8L782.0 197.5L782.9 200.8L783.8 197.5L784.7 200.6L785.6 197.5L786.5 201.1L787.4 196.8L788.3 201.3L789.2 197.5L790.1 201.1L791.0 196.9L791.9 200.5L792.8 196.7L793.7 201.4L794.6 197.4L795.5 201.4L796.4 197.2L797.3 200.9L798.2 196.6L799.1 201.2L800.0 197.5L800.9 200.8L801.8 197.1L802.7 200.7L803.6 197.4L804.5 200.7L805.4 196.9L806.3 200.4L807.2 197.0L808.1 200.8L809.0 197.6L809.9 200.7L810.8 197.0L811.7 200.9L812.6 197.6L813.5 201.4L814.4 199.2L816.4 199.3L818.4 198.8L820.4 198.9L822.4 198.7L824.4 199.2L826.4 198.9L828.4 198.8L830.4 199.0L832.4 199.2L834.4 199.2L836.4 198.9L838.4 198.8L840.4 199.3L842.4 199.0L844.4 199.1L846.4 198.8L848.4 198.7L850.4 199.1L852.4 199.0L854.4 198.7L856.4 199.3L858.4 199.1L860.4 199.2L862.4 198.8L864.4 185.2L865.1 210.7L865.9 184.3L866.6 212.7L867.4 185.3L868.1 213.9L868.9 182.5L869.6 213.1L870.4 185.4L871.1 214.1L871.9 185.0L872.6 212.5L873.4 185.3L874.1 212.3L874.9 185.1L875.6 213.3L876.4 184.8L877.1 214.9L877.9 184.8L878.6 214.0L879.4 185.2L880.1 213.4L880.9 185.8L881.6 213.0L882.4 185.8L883.1 214.8L883.9 183.9L884.6 212.8L885.4 184.1L886.1 215.6L886.9 185.5L887.6 215.1L888.4 184.3L889.1 213.9L889.9 182.8L890.6 213.6L891.4 184.0L892.1 214.7L892.9 182.3L893.6 213.4L894.4 182.8L895.1 214.7L895.9 183.5L896.6 213.6L897.4 184.6L898.1 212.3L898.9 185.4L899.6 212.4L900.4 183.2L901.1 213.1L901.9 185.3L902.6 212.4L903.4 182.8L904.1 215.3L904.9 183.4L905.6 213.2L906.4 185.0L907.1 213.2L907.9 184.2L908.6 212.7L909.4 184.2L910.1 213.1L910.9 182.3L911.6 215.7L912.4 183.9L913.1 213.0L913.9 182.3L914.6 213.3L915.4 184.6L916.1 212.1L916.9 184.5L917.6 213.9L918.4 184.0L919.1 212.9L919.9 184.0L920.6 212.0L921.4 185.4L922.1 211.6L922.9 185.7L923.6 210.7L924.4 187.7L925.1 210.8L925.9 198.8L927.9 199.1L929.9 199.0L931.9 199.2L933.9 199.1L935.9 199.1L937.9 199.2L939.9 198.9L941.9 198.9L943.9 199.3L945.9 198.8L947.9 199.1L949.9 199.1L951.9 198.7L953.9 199.2L955.9 199.2L957.9 199.1L959.9 199.1L961.9 199.2L963.9 198.8L965.9 199.0L967.9 199.0L969.9 199.2L971.9 199.2L973.9 199.2L975.9 199.1L977.9 199.2L979.9 199.1L981.9 199.1L983.9 198.8L985.9 198.7L987.9 198.8L989.9 198.9L991.9 198.8L993.9 199.2L995.9 199.0L997.9 199.1L999.9 199.1L1001.9 190.7L1002.6 207.3L1003.4 191.5L1004.1 208.5L1004.9 189.3L1005.6 208.5L1006.4 189.2L1007.1 209.4L1007.9 189.8L1008.6 210.2L1009.4 188.7L1010.1 209.0L1010.9 188.2L1011.6 211.5L1012.4 187.8L1013.1 212.1L1013.9 184.8L1014.6 212.0L1015.4 186.1L1016.1 212.5L1016.9 184.5L1017.6 214.1L1018.4 184.1L1019.1 214.3L1019.9 185.5L1020.6 213.0L1021.4 184.3L1022.1 215.9L1022.9 183.6L1023.6 215.8L1024.4 184.2L1025.1 214.2L1025.9 182.6L1026.6 217.4L1027.4 180.2L1028.1 218.0L1028.9 181.4L1029.6 217.9L1030.4 180.0L1031.1 218.3L1031.9 181.3L1032.6 220.0L1033.4 181.4L1034.1 219.9L1034.9 178.7L1035.6 214.9L1036.4 181.4L1037.1 217.9L1037.9 179.8L1038.6 215.7L1039.4 183.3L1040.1 214.2L1040.9 181.2L1041.6 213.6L1042.4 183.3L1043.1 212.8L1043.9 184.1L1044.6 215.2L1045.4 186.0L1046.1 214.1L1046.9 185.3L1047.6 213.7L1048.4 185.3L1049.1 210.9L1049.9 185.3L1050.6 211.2L1051.4 188.5L1052.1 209.2L1052.9 187.7L1053.6 209.9L1054.4 188.8L1055.1 208.5L1055.9 189.2L1056.6 208.4L1057.4 188.6L1058.1 207.1L1058.9 189.5L1059.6 208.4L1060.4 191.4L1061.1 207.9L1061.9 190.8L1062.6 207.3L1063.4 198.9L1065.4 198.9L1067.4 198.9L1069.4 199.3L1071.4 199.1L1073.4 198.9L1075.4 199.0L1077.4 198.9L1079.4 198.7L1081.4 198.8L1083.4 199.2L1085.4 198.9L1087.4 199.3L1089.4 198.8L1091.4 198.9L1093.4 199.0L1095.4 198.8L1097.4 198.9L1099.4 199.3L1101.4 199.2L1103.4 199.2L1105.4 199.1L1107.4 199.2L1109.4 199.3L1111.4 199.0L1113.4 199.1L1115.4 198.7L1117.4 199.1L1119.4 199.0L1121.4 199.2L1123.4 199.1L1125.4 198.9L1127.4 198.7L1129.4 199.3L1131.4 198.8L1133.4 199.0L1135.4 198.9L1137.4 198.9L1139.4 199.1L1141.4 199.3L1143.4 198.9L1145.4 199.1L1147.4 198.9L1149.4 199.0L1151.4 198.9L1153.4 198.8L1155.4 198.8L1157.4 198.8L1159.4 199.2L1161.4 199.0L1163.4 198.8L1165.4 199.2L1167.4 199.3L1169.4 199.0L1171.4 198.8L1173.4 198.8L1175.4 198.8L1177.4 198.9L1179.4 198.8L1181.4 198.8L1183.4 198.9L1185.4 199.0L1187.4 199.2L1189.4 199.1L1191.4 198.9L1193.4 198.9L1195.4 199.0L1197.4 198.9L1199.4 198.9L1201.4 198.7L1203.4 198.9L1205.4 199.3L1207.4 198.8L1209.4 199.0L1211.4 199.1L1213.4 199.2L1215.4 198.8L1217.4 198.9L1219.4 198.8L1221.4 198.9L1223.4 199.0L1225.4 199.3L1227.4 199.2L1229.4 199.2L1231.4 198.7L1233.4 198.7L1235.4 199.1L1237.4 199.2L1239.4 199.0L1241.4 199.1L1243.4 198.7L1245.4 198.9L1247.4 199.3L1249.4 199.2L1251.4 199.2L1253.4 199.3L1255.4 198.8L1257.4 198.8L1259.4 198.8L1261.4 199.0L1263.4 199.1L1265.4 199.3L1267.4 199.1L1269.4 199.1L1271.4 199.2L1273.4 199.0L1275.4 199.0L1277.4 198.7L1279.4 199.2L1281.4 198.8L1283.4 199.3L1285.4 199.1L1287.4 198.9L1289.4 197.4L1290.3 200.8L1291.2 196.8L1292.1 201.3L1293.0 197.4L1293.9 200.6L1294.8 196.9L1295.7 201.2L1296.6 197.1L1297.5 200.8L1298.4 196.8L1299.3 200.5L1300.2 197.2L1301.1 201.0L1302.0 196.4L1302.9 201.2L1303.8 196.5L1304.7 201.0L1305.6 197.2L1306.5 200.8L1307.4 196.4L1308.3 201.3L1309.2 197.2L1310.1 200.5L1311.0 196.9L1311.9 201.3L1312.8 197.0L1313.7 200.8L1314.6 196.7L1315.5 201.5L1316.4 198.8L1318.4 198.7L1320.4 198.9L1322.4 199.0L1324.4 199.1L1326.4 198.8L1328.4 199.2L1330.4 199.1L1332.4 199.0L1334.4 198.8L1336.4 199.3L1338.4 198.9L1340.4 199.2L1342.4 198.8L1344.4 198.8L1346.4 199.2L1348.4 198.9L1350.4 199.3L1352.4 199.0L1354.4 198.8L1356.4 198.8L1358.4 199.0L1360.4 199.1L1362.4 199.3L1364.4 198.8L1366.4 198.9L1368.4 198.8L1370.4 199.3L1372.4 198.8L1374.4 198.7L1376.4 198.7L1378.4 198.9L1380.4 199.2L1382.4 199.2L1384.4 199.1L1386.4 199.3L1388.4 199.3L1390.4 198.9L1392.4 198.8L1394.4 199.3L1396.4 199.1L1398.4 198.7L1400.4 199.1L1402.4 197.5L1403.3 200.5L1404.2 197.5L1405.1 200.4L1406.0 197.8L1406.9 200.5L1407.8 197.5L1408.7 201.1L1409.6 197.7L1410.5 201.1L1411.4 197.6L1412.3 200.5L1413.2 197.1L1414.1 200.9L1415.0 197.4L1415.9 200.2L1416.8 197.4L1417.7 200.5L1418.6 197.0L1419.5 200.4L1420.4 197.5L1421.3 201.0L1422.2 197.8L1423.1 200.6L1424.0 197.1L1424.9 200.9L1425.8 197.8L1426.7 200.2L1427.6 197.7L1428.5 201.0L1429.4 197.6L1430.3 200.9L1431.2 197.0L1432.1 200.5L1433.0 197.6L1433.9 201.1L1434.8 197.2L1435.7 200.4L1436.6 197.2L1437.5 200.5L1438.4 197.6L1439.3 200.2L1440.2 197.1L1441.1 201.0L1442.0 197.2L1442.9 201.0L1443.8 197.8L1444.7 200.4L1445.6 197.4L1446.5 201.1L1447.4 196.9L1448.3 200.5L1449.2 197.6L1450.1 200.6L1451.0 197.4L1451.9 201.0L1452.8 197.6L1453.7 200.9L1454.6 197.1L1455.5 200.9L1456.4 197.1L1457.3 200.7L1458.2 197.5L1459.1 200.5L1460.0 197.5L1460.9 200.9L1461.8 197.7L1462.7 200.4L1463.6 197.1L1464.5 200.4L1465.4 197.7L1466.3 200.2L1467.2 197.3L1468.1 200.5L1469.0 196.9L1469.9 201.0L1470.8 196.9L1471.7 200.4L1472.6 197.7L1473.5 200.3L1474.4 197.4L1475.3 200.8L1476.2 197.4L1477.1 200.4L1478.0 197.4L1478.9 200.8L1479.8 197.2L1480.7 200.9L1481.6 197.0L1482.5 200.8L1483.4 197.7L1484.3 201.0L1485.2 197.5L1486.1 200.7L1487.0 197.5L1487.9 200.9L1488.8 197.6L1489.7 200.4L1490.6 197.6L1491.5 200.3L1492.4 197.0L1493.3 200.7L1494.2 197.5L1495.1 200.6L1496.0 196.9L1496.9 200.7L1497.8 197.6L1498.7 200.9L1499.6 197.2" stroke="#4db3f5" stroke-width="1" fill="none" stroke-linejoin="round"/><path d="M335.5 199.3L337.5 198.8L339.5 199.0L341.5 199.2L343.5 199.2L345.5 199.2L347.5 198.7L349.5 198.9L351.5 198.8L353.5 198.8L355.5 199.3L357.5 199.0L359.5 200.5L360.4 197.8L361.3 200.5L362.2 197.8L363.1 200.1L364.0 197.6L364.9 200.5L365.8 198.0L366.7 200.3L367.6 197.7L368.5 200.0L369.4 197.9L370.3 200.0L371.2 198.0L372.1 200.1L373.0 197.7L373.9 200.3L374.8 198.8L376.8 198.7L378.8 198.9L380.8 199.1L382.8 198.8L384.8 198.9L386.8 198.8L388.8 199.2L390.8 199.0L392.8 198.7L394.8 198.8L396.8 198.9L398.8 199.0L400.8 199.1L402.8 198.8L404.8 198.8L406.8 199.1L408.8 198.9L410.8 198.9L412.8 198.9L414.8 199.3L416.8 198.9L418.8 199.0L420.8 198.9L422.8 198.9L424.8 199.2L426.8 199.3L428.8 198.9L430.8 198.8L432.8 199.1L434.8 198.8L436.8 198.7L438.8 199.2L440.8 199.0L442.8 199.2L444.8 198.9L446.8 199.2L448.8 199.0L450.8 198.8L452.8 198.7L454.8 199.0L456.8 199.1L458.8 199.2L460.8 198.8L462.8 199.1L464.8 198.9L466.8 199.0L468.8 198.8L470.8 198.9L472.8 199.0L474.8 199.3L476.8 198.8L478.8 199.0L480.8 199.2L482.8 199.3L484.8 198.8L486.8 198.8L488.8 199.3L490.8 199.3L492.8 199.0L494.8 198.7L496.8 199.3L498.8 198.9L500.8 199.2L502.8 199.1L504.8 199.2L506.8 198.8L508.8 199.2L510.8 198.8L512.8 198.9L514.8 199.2L516.8 196.9L517.7 200.5L518.6 197.5L519.5 200.7L520.4 197.2L521.3 200.7L522.2 197.6L523.1 200.6L524.0 197.0L524.9 201.2L525.8 197.6L526.7 200.9L527.6 196.9L528.5 200.4L529.4 196.9L530.3 200.4L531.2 197.1L532.1 200.9L533.0 197.1L533.9 200.6L534.8 197.3L535.7 200.9L536.6 197.3L537.5 201.0L538.4 197.2L539.3 200.8L540.2 197.7L541.1 200.9L542.0 197.2L542.9 200.6L543.8 196.9L544.7 201.1L545.6 197.2L546.5 200.5L547.4 197.2L548.3 200.4L549.2 197.6L550.1 200.7L551.0 197.6L551.9 200.8L552.8 197.2L553.7 200.4L554.6 197.0L555.5 200.4L556.4 197.0L557.3 201.1L558.2 197.2L559.1 200.4L560.0 197.2L560.9 200.7L561.8 196.7L562.7 200.5L563.6 196.8L564.5 201.3L565.4 197.0L566.3 201.1L567.2 197.5L568.1 201.3L569.0 197.2L569.9 201.3L570.8 196.8L571.7 200.5L572.6 196.9L573.5 201.2L574.4 197.6L575.3 200.7L576.2 199.2L578.2 198.8L580.2 199.2L582.2 198.9L584.2 199.2L586.2 198.8L588.2 199.0L590.2 199.3L592.2 197.6L593.1 200.4L594.0 197.3L594.9 200.5L595.8 197.8L596.7 200.4L597.6 197.7L598.5 201.0L599.4 197.2L600.3 201.0L601.2 197.6L602.1 199.2L604.1 198.8L606.1 199.0L608.1 199.1L610.1 198.9L612.1 199.2L614.1 202.8L615.0 195.1L615.9 203.5L616.8 196.1L617.7 203.7L618.6 195.0L619.5 202.5L620.4 194.7L621.3 202.2L622.2 194.3L623.1 202.9L624.0 195.6L624.9 203.2L625.8 195.4L626.7 202.1L627.6 194.8L628.5 198.7L630.5 199.2L632.5 198.9L634.5 199.1L636.5 199.3L638.5 199.1L640.5 199.1L642.5 198.9L644.5 198.7L646.5 198.7L648.5 198.8L650.5 199.1L652.5 199.0L654.5 199.0L656.5 199.2L658.5 198.8L660.5 198.8L662.5 199.1L664.5 198.7L666.5 198.7L668.5 198.9L670.5 198.8L672.5 198.9L674.5 198.8L676.5 199.1L678.5 199.1L680.5 198.8L682.5 199.1L684.5 199.0L686.5 198.8L688.5 200.5L689.4 197.9L690.3 200.0L691.2 198.0L692.1 200.3L693.0 197.5L693.9 200.4L694.8 197.8L695.7 198.9L697.7 198.7L699.7 199.1L701.7 199.0L703.7 198.9L705.7 199.1L707.7 199.0L709.7 199.3L711.7 199.1L713.7 198.8L715.7 199.2L717.7 198.7L719.7 199.0L721.7 198.9L723.7 198.8L725.7 198.7L727.7 199.2L729.7 198.7L731.7 199.0L733.7 199.3L735.7 198.8L737.7 198.8L739.7 199.1L741.7 199.0L743.7 199.1L745.7 199.2L747.7 198.8L749.7 198.9L751.7 198.9L753.7 199.9L754.6 197.5L755.5 200.4L756.4 197.6L757.3 199.9L758.2 197.5L759.1 200.4L760.0 199.0L762.0 199.1L764.0 199.0L766.0 198.8L768.0 198.8L770.0 198.8L772.0 198.7L774.0 198.9L776.0 199.1L778.0 199.1L780.0 199.2L782.0 197.0L782.9 200.6L783.8 197.1L784.7 200.8L785.6 196.9L786.5 200.8L787.4 197.4L788.3 201.0L789.2 196.7L790.1 200.5L791.0 196.8L791.9 200.3L792.8 197.4L793.7 200.6L794.6 196.9L795.5 201.3L796.4 196.9L797.3 200.6L798.2 196.8L799.1 200.6L800.0 197.4L800.9 201.2L801.8 197.1L802.7 201.0L803.6 197.0L804.5 201.3L805.4 197.2L806.3 201.2L807.2 197.0L808.1 201.2L809.0 197.2L809.9 201.0L810.8 197.1L811.7 200.6L812.6 197.5L813.5 200.9L814.4 198.7L816.4 199.2L818.4 198.8L820.4 198.7L822.4 198.8L824.4 199.3L826.4 198.9L828.4 198.8L830.4 198.7L832.4 198.7L834.4 199.1L836.4 199.1L838.4 199.1L840.4 199.1L842.4 198.7L844.4 199.1L846.4 198.9L848.4 199.2L850.4 199.2L852.4 199.2L854.4 198.7L856.4 199.2L858.4 199.2L860.4 199.3L862.4 198.8L864.4 190.5L864.9 207.2L865.5 191.0L866.0 208.6L866.6 189.5L867.1 208.0L867.7 189.7L868.2 207.8L868.8 191.1L869.3 206.5L869.9 191.6L870.4 207.6L871.0 191.6L871.5 206.5L872.1 191.4L872.6 205.8L873.2 191.9L873.7 206.1L874.3 191.7L875.2 204.9L876.1 193.4L877.0 206.6L877.9 193.0L878.8 205.9L879.7 193.3L880.6 202.7L881.5 194.8L882.4 202.8L883.3 195.0L884.2 201.8L885.1 196.2L886.0 201.1L886.9 197.6L887.8 201.4L888.7 197.2L889.6 202.2L890.5 196.5L891.4 201.4L892.3 195.9L893.2 203.6L894.1 193.5L895.0 202.4L895.9 194.0L896.8 204.8L897.7 190.9L898.2 206.5L898.8 190.4L899.3 207.9L899.9 188.4L900.4 208.7L901.0 186.9L901.5 209.8L902.1 187.9L902.6 211.8L903.2 186.8L903.7 210.0L904.3 186.4L904.8 210.0L905.4 185.8L905.9 211.9L906.5 185.8L907.0 211.7L907.6 187.1L908.1 211.1L908.7 186.9L909.2 212.6L909.8 187.8L910.3 212.7L910.9 188.0L911.4 210.6L912.0 187.2L912.5 212.8L913.1 186.4L913.6 211.2L914.2 185.2L914.7 210.8L915.3 186.4L915.8 211.8L916.4 185.5L916.9 212.5L917.5 185.8L918.0 211.3L918.6 186.7L919.1 210.7L919.7 185.1L920.2 212.4L920.8 185.3L921.3 210.9L921.9 186.3L922.4 212.8L923.0 185.8L923.5 210.8L924.1 186.1L924.6 213.3L925.2 186.8L925.7 198.8L927.7 198.9L929.7 199.1L931.7 199.2L933.7 198.8L935.7 198.8L937.7 198.8L939.7 198.9L941.7 199.0L943.7 198.8L945.7 198.9L947.7 198.8L949.7 199.3L951.7 199.1L953.7 198.8L955.7 199.3L957.7 198.8L959.7 198.9L961.7 199.3L963.7 199.2L965.7 199.1L967.7 199.0L969.7 203.1L970.6 193.7L971.5 202.9L972.4 194.8L973.3 203.6L974.2 195.3L975.1 203.7L976.0 193.3L976.9 204.5L977.8 194.0L978.7 204.3L979.6 194.1L980.5 203.0L981.4 193.8L982.3 203.7L983.2 193.4L984.1 205.1L985.0 194.2L985.9 204.1L986.8 193.4L987.7 203.7L988.6 194.8L989.5 204.5L990.4 193.0L991.3 204.7L992.2 193.5L993.1 204.9L994.0 193.6L994.9 204.3L995.8 194.2L996.7 203.4L997.6 193.7L998.5 202.9L999.4 194.3L1000.3 204.7L1001.2 182.6L1001.8 214.8L1002.3 184.9L1002.9 213.5L1003.4 184.6L1004.0 213.7L1004.5 185.3L1005.1 213.3L1005.6 184.1L1006.2 211.2L1006.7 185.6L1007.3 212.5L1007.8 186.9L1008.4 211.1L1008.9 185.7L1009.5 209.3L1010.0 187.5L1010.6 209.2L1011.1 187.4L1011.7 210.7L1012.2 188.7L1012.8 208.0L1013.3 189.1L1013.9 208.6L1014.4 189.3L1015.0 208.0L1015.5 190.0L1016.1 208.1L1016.6 190.8L1017.2 206.7L1017.7 190.5L1018.3 204.5L1019.2 192.3L1020.1 204.4L1021.0 192.9L1021.9 203.0L1022.8 193.2L1023.7 202.9L1024.6 196.1L1025.5 202.0L1026.4 196.1L1027.3 201.0L1028.2 196.8L1029.1 200.8L1030.0 197.3L1030.9 200.1L1031.8 198.2L1032.7 200.1L1033.6 197.1L1034.5 201.5L1035.4 196.6L1036.3 201.4L1037.2 195.3L1038.1 202.3L1039.0 195.7L1039.9 202.4L1040.8 193.6L1041.7 204.9L1042.6 193.1L1043.5 204.8L1044.4 192.6L1045.3 206.0L1045.8 190.3L1046.4 206.7L1046.9 190.4L1047.5 208.2L1048.0 189.5L1048.6 208.0L1049.1 190.1L1049.7 208.7L1050.2 190.0L1050.8 210.0L1051.3 189.0L1051.9 210.6L1052.4 188.7L1053.0 209.9L1053.5 188.2L1054.1 210.5L1054.6 187.9L1055.2 209.8L1055.7 185.8L1056.3 211.1L1056.8 186.8L1057.4 211.7L1057.9 185.5L1058.5 212.6L1059.0 184.4L1059.6 214.0L1060.1 184.8L1060.7 215.5L1061.2 182.5L1061.8 212.8L1062.3 182.0L1062.9 204.5L1063.8 193.8L1064.7 202.6L1065.6 193.6L1066.5 203.9L1067.4 195.7L1068.3 202.3L1069.2 193.3L1070.1 203.9L1071.0 195.1L1071.9 202.6L1072.8 195.3L1073.7 202.9L1074.6 193.8L1075.5 203.2L1076.4 195.3L1077.3 204.5L1078.2 193.7L1079.1 202.7L1080.0 193.5L1080.9 203.8L1081.8 193.8L1082.7 204.0L1083.6 193.5L1084.5 204.3L1085.4 193.6L1086.3 202.8L1087.2 194.0L1088.1 203.6L1089.0 193.9L1089.9 203.4L1090.8 193.5L1091.7 203.7L1092.6 195.0L1093.5 202.9L1094.4 198.2L1095.3 200.0L1096.2 198.2L1097.1 200.0L1098.0 198.2L1098.9 200.0L1099.8 198.0L1100.7 200.0L1101.6 197.8L1102.5 199.7L1103.4 197.8L1104.3 200.0L1105.2 198.0L1106.1 200.1L1107.0 197.8L1107.9 199.9L1108.8 198.1L1109.7 200.2L1110.6 198.2L1111.5 200.1L1112.4 197.9L1113.3 199.7L1114.2 198.0L1115.1 200.1L1116.0 197.8L1116.9 199.9L1117.8 197.7L1118.7 200.0L1119.6 198.0L1120.5 200.2L1121.4 198.3L1122.3 200.1L1123.2 197.9L1124.1 199.9L1125.0 197.8L1125.9 199.9L1126.8 198.0L1127.7 200.0L1128.6 197.9L1129.5 199.8L1130.4 198.0L1131.3 199.9L1132.2 198.0L1133.1 200.2L1134.0 198.1L1134.9 200.2L1135.8 198.1L1136.7 200.0L1137.6 198.1L1138.5 200.0L1139.4 197.8L1140.3 200.1L1141.2 197.9L1142.1 199.9L1143.0 198.1L1143.9 199.9L1144.8 198.0L1145.7 200.1L1146.6 197.9L1147.5 199.7L1148.4 197.9L1149.3 200.2L1150.2 198.0L1151.1 199.7L1152.0 198.1L1152.9 199.7L1153.8 198.2L1154.7 200.2L1155.6 198.0L1156.5 200.1L1157.4 197.9L1158.3 200.2L1159.2 197.9L1160.1 200.1L1161.0 197.9L1161.9 200.1L1162.8 198.0L1163.7 200.1L1164.6 198.2L1165.5 200.1L1166.4 198.0L1167.3 200.1L1168.2 198.2L1169.1 199.8L1170.0 198.3L1170.9 200.1L1171.8 197.8L1172.7 200.1L1173.6 198.1L1174.5 200.2L1175.4 197.9L1176.3 200.0L1177.2 198.1L1178.1 199.9L1179.0 198.1L1179.9 199.9L1180.8 198.0L1181.7 200.1L1182.6 197.8L1183.5 199.7L1184.4 198.0L1185.3 199.7L1186.2 198.2L1187.1 200.2L1188.0 198.0L1188.9 200.2L1189.8 198.0L1190.7 199.7L1191.6 198.1L1192.5 200.0L1193.4 197.8L1194.3 200.2L1195.2 198.0L1196.1 199.9L1197.0 198.2L1197.9 200.1L1198.8 198.2L1199.7 199.8L1200.6 198.3L1201.5 199.7L1202.4 197.9L1203.3 199.8L1204.2 197.8L1205.1 199.8L1206.0 197.8L1206.9 199.8L1207.8 198.3L1208.7 200.1L1209.6 198.1L1210.5 200.1L1211.4 198.2L1212.3 199.7L1213.2 197.9L1214.1 200.1L1215.0 197.8L1215.9 200.1L1216.8 198.2L1217.7 200.1L1218.6 197.9L1219.5 200.0L1220.4 197.8L1221.3 199.9L1222.2 197.8L1223.1 200.1L1224.0 198.3L1224.9 199.7L1225.8 197.9L1226.7 200.2L1227.6 198.2L1228.5 199.9L1229.4 197.9L1230.3 199.8L1231.2 197.8L1232.1 200.0L1233.0 198.2L1233.9 199.9L1234.8 198.0L1235.7 200.0L1236.6 197.9L1237.5 199.8L1238.4 197.8L1239.3 199.9L1240.2 197.9L1241.1 200.1L1242.0 198.1L1242.9 199.9L1243.8 197.9L1244.7 200.2L1245.6 197.9L1246.5 200.0L1247.4 198.1L1248.3 199.8L1249.2 197.8L1250.1 200.1L1251.0 197.8L1251.9 199.9L1252.8 198.0L1253.7 200.2L1254.6 197.8L1255.5 200.0L1256.4 198.1L1257.3 200.0L1258.2 197.8L1259.1 199.9L1260.0 197.9L1260.9 200.0L1261.8 197.8L1262.7 200.2L1263.6 198.1L1264.5 199.7L1265.4 198.1L1266.3 199.9L1267.2 199.1L1269.2 199.2L1271.2 199.2L1273.2 198.7L1275.2 199.2L1277.2 199.2L1279.2 199.2L1281.2 199.0L1283.2 198.9L1285.2 199.2L1287.2 199.2L1289.2 196.3L1290.1 202.0L1291.0 196.7L1291.9 200.9L1292.8 196.5L1293.7 201.9L1294.6 196.9L1295.5 201.8L1296.4 195.9L1297.3 201.1L1298.2 196.4L1299.1 201.7L1300.0 196.6L1300.9 201.1L1301.8 196.9L1302.7 201.8L1303.6 196.1L1304.5 201.4L1305.4 197.1L1306.3 201.9L1307.2 196.2L1308.1 201.1L1309.0 196.4L1309.9 202.0L1310.8 196.0L1311.7 201.5L1312.6 196.6L1313.5 201.6L1314.4 196.9L1315.3 201.1L1316.2 197.0L1317.1 199.1L1319.1 198.9L1321.1 199.0L1323.1 198.9L1325.1 199.0L1327.1 198.8L1329.1 198.7L1331.1 199.3L1333.1 198.9L1335.1 198.8L1337.1 199.1L1339.1 199.2L1341.1 198.8L1343.1 199.1L1345.1 198.9L1347.1 199.0L1349.1 198.7L1351.1 198.7L1353.1 199.3L1355.1 199.2L1357.1 199.0L1359.1 199.0L1361.1 198.9L1363.1 199.2L1365.1 203.0L1366.0 193.8L1366.9 203.8L1367.8 194.0L1368.7 204.3L1369.6 195.3L1370.5 202.2L1371.4 195.4L1372.3 202.6L1373.2 195.6L1374.1 202.3L1375.0 194.4L1375.9 204.4L1376.8 194.6L1377.7 204.6L1378.6 199.2L1380.6 198.7L1382.6 199.1L1384.6 198.9L1386.6 198.8L1388.6 199.3L1390.6 198.9L1392.6 199.0L1394.6 199.1L1396.6 199.3L1398.6 199.1L1400.6 198.9L1402.6 197.0L1403.5 200.7L1404.4 196.4L1405.3 201.6L1406.2 197.3L1407.1 200.5L1408.0 197.2L1408.9 200.9L1409.8 196.5L1410.7 201.5L1411.6 196.6L1412.5 200.6L1413.4 196.6L1414.3 201.3L1415.2 196.8L1416.1 201.6L1417.0 197.4L1417.9 200.7L1418.8 196.7L1419.7 201.6L1420.6 196.7L1421.5 200.8L1422.4 196.8L1423.3 201.4L1424.2 197.4L1425.1 200.9L1426.0 197.2L1426.9 200.6L1427.8 197.0L1428.7 200.7L1429.6 197.2L1430.5 200.7L1431.4 196.7L1432.3 200.5L1433.2 196.7L1434.1 200.7L1435.0 197.5L1435.9 201.5L1436.8 197.3L1437.7 201.6L1438.6 196.5L1439.5 201.5L1440.4 197.3L1441.3 201.0L1442.2 197.4L1443.1 201.5L1444.0 193.6L1444.9 203.9L1445.8 194.6L1446.7 203.2L1447.6 193.6L1448.5 203.5L1449.4 194.1L1450.3 202.7L1451.2 195.1L1452.1 202.5L1453.0 193.8L1453.9 203.8L1454.8 195.2L1455.7 204.6L1456.6 194.9L1457.5 203.5L1458.4 195.2L1459.3 203.1L1460.2 193.4L1461.1 203.3L1462.0 195.1L1462.9 203.7L1463.8 194.7L1464.7 204.8L1465.6 195.2L1466.5 205.1L1467.4 195.4L1468.3 204.9L1469.2 193.7L1470.1 203.1L1471.0 194.2L1471.9 203.3L1472.8 194.8L1473.7 203.1L1474.6 194.5L1475.5 205.2L1476.4 192.7L1477.3 205.1L1478.2 195.1L1479.1 203.4L1480.0 196.5L1480.9 200.6L1481.8 196.7L1482.7 200.8L1483.6 196.4L1484.5 200.5L1485.4 196.6L1486.3 200.9L1487.2 197.3L1488.1 200.5L1489.0 196.6L1489.9 201.1L1490.8 197.3L1491.7 201.0L1492.6 196.5L1493.5 200.7L1494.4 196.9L1495.3 200.7L1496.2 197.3L1497.1 201.4L1498.0 196.7L1498.9 200.7L1499.8 197.4" stroke="#0072bd" stroke-width="1" fill="none" stroke-linejoin="round"/><path d="M335.5 199H1500.5" stroke="#2a8bd6" stroke-width="1.2"/><path d="M335.5 220.5v-6M335.5 177.5v6M361.5 220.5v-4M361.5 177.5v4M387.5 220.5v-4M387.5 177.5v4M413.5 220.5v-6M413.5 177.5v6M439.5 220.5v-4M439.5 177.5v4M464.5 220.5v-4M464.5 177.5v4M490.5 220.5v-6M490.5 177.5v6M516.5 220.5v-4M516.5 177.5v4M542.5 220.5v-4M542.5 177.5v4M568.5 220.5v-6M568.5 177.5v6M594.5 220.5v-4M594.5 177.5v4M620.5 220.5v-4M620.5 177.5v4M646.5 220.5v-6M646.5 177.5v6M671.5 220.5v-4M671.5 177.5v4M697.5 220.5v-4M697.5 177.5v4M723.5 220.5v-6M723.5 177.5v6M749.5 220.5v-4M749.5 177.5v4M775.5 220.5v-4M775.5 177.5v4M801.5 220.5v-6M801.5 177.5v6M827.5 220.5v-4M827.5 177.5v4M853.5 220.5v-4M853.5 177.5v4M878.5 220.5v-6M878.5 177.5v6M904.5 220.5v-4M904.5 177.5v4M930.5 220.5v-4M930.5 177.5v4M956.5 220.5v-6M956.5 177.5v6M982.5 220.5v-4M982.5 177.5v4M1008.5 220.5v-4M1008.5 177.5v4M1034.5 220.5v-6M1034.5 177.5v6M1060.5 220.5v-4M1060.5 177.5v4M1086.5 220.5v-4M1086.5 177.5v4M1111.5 220.5v-6M1111.5 177.5v6M1137.5 220.5v-4M1137.5 177.5v4M1163.5 220.5v-4M1163.5 177.5v4M1189.5 220.5v-6M1189.5 177.5v6M1215.5 220.5v-4M1215.5 177.5v4M1241.5 220.5v-4M1241.5 177.5v4M1267.5 220.5v-6M1267.5 177.5v6M1293.5 220.5v-4M1293.5 177.5v4M1318.5 220.5v-4M1318.5 177.5v4M1344.5 220.5v-6M1344.5 177.5v6M1370.5 220.5v-4M1370.5 177.5v4M1396.5 220.5v-4M1396.5 177.5v4M1422.5 220.5v-6M1422.5 177.5v6M1448.5 220.5v-4M1448.5 177.5v4M1474.5 220.5v-4M1474.5 177.5v4M1500.5 220.5v-6M1500.5 177.5v6M335.5 184.5h4M1500.5 184.5h-4M335.5 214.5h4M1500.5 214.5h-4M335.5 199.5h5" stroke="#222" stroke-width="1"/><rect x="335.5" y="177.5" width="1165.0" height="43.0" fill="none" stroke="#1a1a1a" stroke-width="1"/></svg>
<div style="position:absolute;top:224.5px;height:17px;line-height:17px;font-size:13px;color:#262626;white-space:nowrap;left:331.9px;">0</div>
<div style="position:absolute;top:224.5px;height:17px;line-height:17px;font-size:13px;color:#262626;white-space:nowrap;left:404.1px;">0.3</div>
<div style="position:absolute;top:224.5px;height:17px;line-height:17px;font-size:13px;color:#262626;white-space:nowrap;left:481.7px;">0.6</div>
<div style="position:absolute;top:224.5px;height:17px;line-height:17px;font-size:13px;color:#262626;white-space:nowrap;left:559.4px;">0.9</div>
<div style="position:absolute;top:224.5px;height:17px;line-height:17px;font-size:13px;color:#262626;white-space:nowrap;left:637.0px;">1.2</div>
<div style="position:absolute;top:224.5px;height:17px;line-height:17px;font-size:13px;color:#262626;white-space:nowrap;left:714.7px;">1.5</div>
<div style="position:absolute;top:224.5px;height:17px;line-height:17px;font-size:13px;color:#262626;white-space:nowrap;left:792.3px;">1.8</div>
<div style="position:absolute;top:224.5px;height:17px;line-height:17px;font-size:13px;color:#262626;white-space:nowrap;left:869.9px;">2.1</div>
<div style="position:absolute;top:224.5px;height:17px;line-height:17px;font-size:13px;color:#262626;white-space:nowrap;left:947.6px;">2.4</div>
<div style="position:absolute;top:224.5px;height:17px;line-height:17px;font-size:13px;color:#262626;white-space:nowrap;left:1025.2px;">2.7</div>
<div style="position:absolute;top:224.5px;height:17px;line-height:17px;font-size:13px;color:#262626;white-space:nowrap;left:1108.3px;">3</div>
<div style="position:absolute;top:224.5px;height:17px;line-height:17px;font-size:13px;color:#262626;white-space:nowrap;left:1180.5px;">3.3</div>
<div style="position:absolute;top:224.5px;height:17px;line-height:17px;font-size:13px;color:#262626;white-space:nowrap;left:1258.1px;">3.6</div>
<div style="position:absolute;top:224.5px;height:17px;line-height:17px;font-size:13px;color:#262626;white-space:nowrap;left:1335.8px;">3.9</div>
<div style="position:absolute;top:224.5px;height:17px;line-height:17px;font-size:13px;color:#262626;white-space:nowrap;left:1413.4px;">4.2</div>
<div style="position:absolute;top:190.5px;height:17px;line-height:17px;font-size:13px;color:#262626;white-space:nowrap;left:322.8px;">0</div>
<div style="position:absolute;top:242.0px;height:19px;line-height:19px;font-size:15px;color:#262626;white-space:nowrap;left:884.5px;">Time (ms)</div>
<div style="position:absolute;left:346px;top:301.5px;width:1154.5px;height:16.0px;background:linear-gradient(90deg,#3e26a8 0.00%,#402ab4 1.59%,#422ec0 3.17%,#4332cb 4.76%,#4537d5 6.35%,#463cde 7.94%,#4741e5 9.52%,#4747eb 11.11%,#484df0 12.70%,#4852f4 14.29%,#4758f8 15.87%,#465efb 17.46%,#4563fd 19.05%,#4269fe 20.63%,#3e6fff 22.22%,#3875fe 23.81%,#327cfc 25.40%,#2f81fa 26.98%,#2e87f7 28.57%,#2d8cf3 30.16%,#2b91ef 31.75%,#2797eb 33.33%,#259be8 34.92%,#23a0e5 36.51%,#20a5e3 38.10%,#1ca9df 39.68%,#18addb 41.27%,#12b1d6 42.86%,#08b5d0 44.44%,#01b8ca 46.03%,#02bac3 47.62%,#0bbdbd 49.21%,#19bfb6 50.79%,#24c1ae 52.38%,#2cc4a7 53.97%,#31c69f 55.56%,#37c897 57.14%,#3fca8e 58.73%,#4acb84 60.32%,#57cc7a 61.90%,#64cd6f 63.49%,#72cd64 65.08%,#81cc59 66.67%,#8fcb4e 68.25%,#9dc943 69.84%,#abc739 71.43%,#b9c431 73.02%,#c5c22a 74.60%,#d1bf27 76.19%,#dcbd29 77.78%,#e6bb2d 79.37%,#f0ba36 80.95%,#f8ba3d 82.54%,#febe3c 84.13%,#fec338 85.71%,#fec934 87.30%,#fccf30 88.89%,#fad62d 90.48%,#f7dc2a 92.06%,#f5e327 93.65%,#f5e924 95.24%,#f6ef20 96.83%,#f7f51b 98.41%,#f9fb15 100.00%)"></div>
<div style="position:absolute;left:346px;top:301.5px;width:1px;height:6px;background:#111"></div>
<div style="position:absolute;top:285.5px;height:17px;line-height:17px;font-size:13px;color:#262626;white-space:nowrap;left:347.1px;">-80</div>
<div style="position:absolute;left:417px;top:301.5px;width:1px;height:6px;background:#111"></div>
<div style="position:absolute;top:285.5px;height:17px;line-height:17px;font-size:13px;color:#262626;white-space:nowrap;left:418.2px;">-76</div>
<div style="position:absolute;left:488px;top:301.5px;width:1px;height:6px;background:#111"></div>
<div style="position:absolute;top:285.5px;height:17px;line-height:17px;font-size:13px;color:#262626;white-space:nowrap;left:489.2px;">-72</div>
<div style="position:absolute;left:559px;top:301.5px;width:1px;height:6px;background:#111"></div>
<div style="position:absolute;top:285.5px;height:17px;line-height:17px;font-size:13px;color:#262626;white-space:nowrap;left:560.3px;">-68</div>
<div style="position:absolute;left:630px;top:301.5px;width:1px;height:6px;background:#111"></div>
<div style="position:absolute;top:285.5px;height:17px;line-height:17px;font-size:13px;color:#262626;white-space:nowrap;left:631.3px;">-64</div>
<div style="position:absolute;left:701px;top:301.5px;width:1px;height:6px;background:#111"></div>
<div style="position:absolute;top:285.5px;height:17px;line-height:17px;font-size:13px;color:#262626;white-space:nowrap;left:702.4px;">-60</div>
<div style="position:absolute;left:772px;top:301.5px;width:1px;height:6px;background:#111"></div>
<div style="position:absolute;top:285.5px;height:17px;line-height:17px;font-size:13px;color:#262626;white-space:nowrap;left:773.5px;">-56</div>
<div style="position:absolute;left:844px;top:301.5px;width:1px;height:6px;background:#111"></div>
<div style="position:absolute;top:285.5px;height:17px;line-height:17px;font-size:13px;color:#262626;white-space:nowrap;left:844.5px;">-52</div>
<div style="position:absolute;left:915px;top:301.5px;width:1px;height:6px;background:#111"></div>
<div style="position:absolute;top:285.5px;height:17px;line-height:17px;font-size:13px;color:#262626;white-space:nowrap;left:915.6px;">-48</div>
<div style="position:absolute;left:986px;top:301.5px;width:1px;height:6px;background:#111"></div>
<div style="position:absolute;top:285.5px;height:17px;line-height:17px;font-size:13px;color:#262626;white-space:nowrap;left:986.6px;">-44</div>
<div style="position:absolute;left:1057px;top:301.5px;width:1px;height:6px;background:#111"></div>
<div style="position:absolute;top:285.5px;height:17px;line-height:17px;font-size:13px;color:#262626;white-space:nowrap;left:1057.7px;">-40</div>
<div style="position:absolute;left:1128px;top:301.5px;width:1px;height:6px;background:#111"></div>
<div style="position:absolute;top:285.5px;height:17px;line-height:17px;font-size:13px;color:#262626;white-space:nowrap;left:1128.8px;">-36</div>
<div style="position:absolute;left:1199px;top:301.5px;width:1px;height:6px;background:#111"></div>
<div style="position:absolute;top:285.5px;height:17px;line-height:17px;font-size:13px;color:#262626;white-space:nowrap;left:1199.8px;">-32</div>
<div style="position:absolute;left:1270px;top:301.5px;width:1px;height:6px;background:#111"></div>
<div style="position:absolute;top:285.5px;height:17px;line-height:17px;font-size:13px;color:#262626;white-space:nowrap;left:1270.9px;">-28</div>
<div style="position:absolute;left:1341px;top:301.5px;width:1px;height:6px;background:#111"></div>
<div style="position:absolute;top:285.5px;height:17px;line-height:17px;font-size:13px;color:#262626;white-space:nowrap;left:1341.9px;">-24</div>
<div style="position:absolute;left:1412px;top:301.5px;width:1px;height:6px;background:#111"></div>
<div style="position:absolute;top:285.5px;height:17px;line-height:17px;font-size:13px;color:#262626;white-space:nowrap;left:1413.0px;">-20</div>
<div style="position:absolute;left:1483px;top:301.5px;width:1px;height:6px;background:#111"></div>
<div style="position:absolute;top:285.5px;height:17px;line-height:17px;font-size:13px;color:#262626;white-space:nowrap;left:1484.1px;">-16</div>
<svg style="position:absolute;left:340px;top:335px" width="1168" height="322.5" viewBox="340 335 1168 322.5"><defs><linearGradient id="g1" gradientUnits="userSpaceOnUse" x1="0" y1="374" x2="0" y2="619"><stop offset="0.0000" stop-color="rgb(26,26,26)"/><stop offset="0.0653" stop-color="rgb(76,76,76)"/><stop offset="0.1388" stop-color="rgb(117,117,117)"/><stop offset="0.9224" stop-color="rgb(117,117,117)"/><stop offset="0.9673" stop-color="rgb(69,69,69)"/><stop offset="1.0000" stop-color="rgb(26,26,26)"/></linearGradient><linearGradient id="g2" gradientUnits="userSpaceOnUse" x1="0" y1="400" x2="0" y2="600"><stop offset="0.0000" stop-color="rgb(51,51,51)"/><stop offset="1.0000" stop-color="rgb(51,51,51)"/></linearGradient><linearGradient id="g3" gradientUnits="userSpaceOnUse" x1="0" y1="364" x2="0" y2="626"><stop offset="0.0000" stop-color="rgb(51,51,51)"/><stop offset="0.0305" stop-color="rgb(76,76,76)"/><stop offset="0.0802" stop-color="rgb(107,107,107)"/><stop offset="0.1374" stop-color="rgb(140,140,140)"/><stop offset="0.2137" stop-color="rgb(161,161,161)"/><stop offset="0.8168" stop-color="rgb(161,161,161)"/><stop offset="0.8855" stop-color="rgb(135,135,135)"/><stop offset="0.9389" stop-color="rgb(102,102,102)"/><stop offset="0.9733" stop-color="rgb(69,69,69)"/><stop offset="1.0000" stop-color="rgb(36,36,36)"/></linearGradient><linearGradient id="g4" gradientUnits="userSpaceOnUse" x1="0" y1="372" x2="0" y2="622"><stop offset="0.0000" stop-color="rgb(36,36,36)"/><stop offset="0.0800" stop-color="rgb(89,89,89)"/><stop offset="0.1600" stop-color="rgb(122,122,122)"/><stop offset="0.8800" stop-color="rgb(122,122,122)"/><stop offset="0.9440" stop-color="rgb(82,82,82)"/><stop offset="1.0000" stop-color="rgb(31,31,31)"/></linearGradient><linearGradient id="g5" gradientUnits="userSpaceOnUse" x1="0" y1="340" x2="0" y2="498"><stop offset="0.0000" stop-color="rgb(128,128,128)"/><stop offset="0.3797" stop-color="rgb(156,156,156)"/><stop offset="0.7911" stop-color="rgb(143,143,143)"/><stop offset="0.9114" stop-color="rgb(97,97,97)"/><stop offset="1.0000" stop-color="rgb(36,36,36)"/></linearGradient><linearGradient id="g6" gradientUnits="userSpaceOnUse" x1="0" y1="642" x2="0" y2="652.5"><stop offset="0.0000" stop-color="rgb(51,51,51)"/><stop offset="0.3810" stop-color="rgb(97,97,97)"/><stop offset="1.0000" stop-color="rgb(102,102,102)"/></linearGradient><linearGradient id="g7" gradientUnits="userSpaceOnUse" x1="0" y1="340" x2="0" y2="352"><stop offset="0.0000" stop-color="rgb(140,140,140)"/><stop offset="0.5000" stop-color="rgb(107,107,107)"/><stop offset="1.0000" stop-color="rgb(36,36,36)"/></linearGradient><linearGradient id="g8" gradientUnits="userSpaceOnUse" x1="0" y1="619" x2="0" y2="652.5"><stop offset="0.0000" stop-color="rgb(36,36,36)"/><stop offset="0.2090" stop-color="rgb(87,87,87)"/><stop offset="0.6269" stop-color="rgb(128,128,128)"/><stop offset="1.0000" stop-color="rgb(158,158,158)"/></linearGradient><linearGradient id="g9" gradientUnits="userSpaceOnUse" x1="0" y1="374" x2="0" y2="615"><stop offset="0.0000" stop-color="rgb(26,26,26)"/><stop offset="0.0498" stop-color="rgb(66,66,66)"/><stop offset="0.1328" stop-color="rgb(117,117,117)"/><stop offset="0.8963" stop-color="rgb(120,120,120)"/><stop offset="0.9544" stop-color="rgb(71,71,71)"/><stop offset="1.0000" stop-color="rgb(26,26,26)"/></linearGradient><linearGradient id="g10" gradientUnits="userSpaceOnUse" x1="0" y1="470" x2="0" y2="652.5"><stop offset="0.0000" stop-color="rgb(0,0,0)"/><stop offset="0.0822" stop-color="rgb(36,36,36)"/><stop offset="0.1973" stop-color="rgb(56,56,56)"/><stop offset="0.4932" stop-color="rgb(56,56,56)"/><stop offset="0.7123" stop-color="rgb(76,76,76)"/><stop offset="1.0000" stop-color="rgb(84,84,84)"/></linearGradient><linearGradient id="g11" gradientUnits="userSpaceOnUse" x1="0" y1="487" x2="0" y2="506"><stop offset="0.0000" stop-color="rgb(115,115,115)"/><stop offset="0.1579" stop-color="rgb(178,178,178)"/><stop offset="0.8421" stop-color="rgb(178,178,178)"/><stop offset="1.0000" stop-color="rgb(102,102,102)"/></linearGradient><linearGradient id="g12" gradientUnits="userSpaceOnUse" x1="0" y1="612" x2="0" y2="629"><stop offset="0.0000" stop-color="rgb(64,64,64)"/><stop offset="0.3529" stop-color="rgb(140,140,140)"/><stop offset="0.5294" stop-color="rgb(217,217,217)"/><stop offset="0.7059" stop-color="rgb(140,140,140)"/><stop offset="1.0000" stop-color="rgb(64,64,64)"/></linearGradient><linearGradient id="g13" gradientUnits="userSpaceOnUse" x1="0" y1="340" x2="0" y2="652.5"><stop offset="0.0000" stop-color="rgb(102,102,102)"/><stop offset="0.0480" stop-color="rgb(115,115,115)"/><stop offset="0.1024" stop-color="rgb(143,143,143)"/><stop offset="0.1536" stop-color="rgb(176,176,176)"/><stop offset="0.1952" stop-color="rgb(196,196,196)"/><stop offset="0.2400" stop-color="rgb(209,209,209)"/><stop offset="0.7840" stop-color="rgb(209,209,209)"/><stop offset="0.8320" stop-color="rgb(189,189,189)"/><stop offset="0.8800" stop-color="rgb(156,156,156)"/><stop offset="0.9280" stop-color="rgb(125,125,125)"/><stop offset="1.0000" stop-color="rgb(97,97,97)"/></linearGradient><linearGradient id="g14" gradientUnits="userSpaceOnUse" x1="0" y1="345" x2="0" y2="652.5"><stop offset="0.0000" stop-color="rgb(8,8,8)"/><stop offset="0.0553" stop-color="rgb(33,33,33)"/><stop offset="0.3089" stop-color="rgb(41,41,41)"/><stop offset="0.4065" stop-color="rgb(64,64,64)"/><stop offset="0.5528" stop-color="rgb(74,74,74)"/><stop offset="0.6667" stop-color="rgb(51,51,51)"/><stop offset="0.8618" stop-color="rgb(38,38,38)"/><stop offset="1.0000" stop-color="rgb(23,23,23)"/></linearGradient><linearGradient id="g15" gradientUnits="userSpaceOnUse" x1="0" y1="476" x2="0" y2="514"><stop offset="0.0000" stop-color="rgb(38,38,38)"/><stop offset="0.1842" stop-color="rgb(128,128,128)"/><stop offset="0.3684" stop-color="rgb(158,158,158)"/><stop offset="0.7105" stop-color="rgb(153,153,153)"/><stop offset="0.8421" stop-color="rgb(115,115,115)"/><stop offset="1.0000" stop-color="rgb(51,51,51)"/></linearGradient><linearGradient id="g16" gradientUnits="userSpaceOnUse" x1="0" y1="340" x2="0" y2="652.5"><stop offset="0.0000" stop-color="rgb(64,64,64)"/><stop offset="0.0560" stop-color="rgb(64,64,64)"/><stop offset="0.0592" stop-color="rgb(8,8,8)"/><stop offset="0.0736" stop-color="rgb(8,8,8)"/><stop offset="0.0768" stop-color="rgb(97,97,97)"/><stop offset="0.1216" stop-color="rgb(128,128,128)"/><stop offset="0.1664" stop-color="rgb(163,163,163)"/><stop offset="0.2176" stop-color="rgb(191,191,191)"/><stop offset="0.2720" stop-color="rgb(209,209,209)"/><stop offset="0.8000" stop-color="rgb(212,212,212)"/><stop offset="0.8448" stop-color="rgb(189,189,189)"/><stop offset="0.8864" stop-color="rgb(153,153,153)"/><stop offset="0.9152" stop-color="rgb(115,115,115)"/><stop offset="0.9280" stop-color="rgb(92,92,92)"/><stop offset="0.9312" stop-color="rgb(13,13,13)"/><stop offset="0.9440" stop-color="rgb(13,13,13)"/><stop offset="0.9472" stop-color="rgb(71,71,71)"/><stop offset="1.0000" stop-color="rgb(64,64,64)"/></linearGradient><linearGradient id="g17" gradientUnits="userSpaceOnUse" x1="0" y1="375" x2="0" y2="618"><stop offset="0.0000" stop-color="rgb(31,31,31)"/><stop offset="0.0741" stop-color="rgb(82,82,82)"/><stop offset="0.1523" stop-color="rgb(115,115,115)"/><stop offset="0.8848" stop-color="rgb(115,115,115)"/><stop offset="1.0000" stop-color="rgb(31,31,31)"/></linearGradient><linearGradient id="g18" gradientUnits="userSpaceOnUse" x1="0" y1="540" x2="0" y2="578"><stop offset="0.0000" stop-color="rgb(26,26,26)"/><stop offset="0.1316" stop-color="rgb(66,66,66)"/><stop offset="0.2763" stop-color="rgb(128,128,128)"/><stop offset="0.3684" stop-color="rgb(219,219,219)"/><stop offset="0.5132" stop-color="rgb(235,235,235)"/><stop offset="0.6579" stop-color="rgb(219,219,219)"/><stop offset="0.7500" stop-color="rgb(128,128,128)"/><stop offset="0.8684" stop-color="rgb(66,66,66)"/><stop offset="1.0000" stop-color="rgb(26,26,26)"/></linearGradient><linearGradient id="g19" gradientUnits="userSpaceOnUse" x1="0" y1="540" x2="0" y2="578"><stop offset="0.0000" stop-color="rgb(26,26,26)"/><stop offset="0.1316" stop-color="rgb(66,66,66)"/><stop offset="0.2763" stop-color="rgb(128,128,128)"/><stop offset="0.3684" stop-color="rgb(219,219,219)"/><stop offset="0.5132" stop-color="rgb(235,235,235)"/><stop offset="0.6579" stop-color="rgb(219,219,219)"/><stop offset="0.7500" stop-color="rgb(128,128,128)"/><stop offset="0.8684" stop-color="rgb(66,66,66)"/><stop offset="1.0000" stop-color="rgb(26,26,26)"/></linearGradient><linearGradient id="g20" gradientUnits="userSpaceOnUse" x1="0" y1="549" x2="0" y2="570"><stop offset="0.0000" stop-color="rgb(212,212,212)"/><stop offset="0.2619" stop-color="rgb(227,227,227)"/><stop offset="0.5000" stop-color="rgb(240,240,240)"/><stop offset="0.7381" stop-color="rgb(227,227,227)"/><stop offset="1.0000" stop-color="rgb(212,212,212)"/></linearGradient><linearGradient id="g21" gradientUnits="userSpaceOnUse" x1="0" y1="345" x2="0" y2="652.5"><stop offset="0.0000" stop-color="rgb(8,8,8)"/><stop offset="0.1789" stop-color="rgb(19,19,19)"/><stop offset="0.3415" stop-color="rgb(29,29,29)"/><stop offset="0.4130" stop-color="rgb(48,48,48)"/><stop offset="0.4585" stop-color="rgb(76,76,76)"/><stop offset="0.5171" stop-color="rgb(82,82,82)"/><stop offset="0.5854" stop-color="rgb(61,61,61)"/><stop offset="0.6992" stop-color="rgb(36,36,36)"/><stop offset="0.8618" stop-color="rgb(22,22,22)"/><stop offset="1.0000" stop-color="rgb(10,10,10)"/></linearGradient><linearGradient id="g22" gradientUnits="userSpaceOnUse" x1="0" y1="487" x2="0" y2="503"><stop offset="0.0000" stop-color="rgb(56,56,56)"/><stop offset="0.1875" stop-color="rgb(117,117,117)"/><stop offset="0.5000" stop-color="rgb(140,140,140)"/><stop offset="0.8125" stop-color="rgb(117,117,117)"/><stop offset="1.0000" stop-color="rgb(56,56,56)"/></linearGradient><linearGradient id="g23" gradientUnits="userSpaceOnUse" x1="0" y1="487" x2="0" y2="503"><stop offset="0.0000" stop-color="rgb(56,56,56)"/><stop offset="0.1875" stop-color="rgb(110,110,110)"/><stop offset="0.5000" stop-color="rgb(133,133,133)"/><stop offset="0.8125" stop-color="rgb(110,110,110)"/><stop offset="1.0000" stop-color="rgb(56,56,56)"/></linearGradient><linearGradient id="g24" gradientUnits="userSpaceOnUse" x1="0" y1="487" x2="0" y2="503"><stop offset="0.0000" stop-color="rgb(56,56,56)"/><stop offset="0.1875" stop-color="rgb(102,102,102)"/><stop offset="0.5000" stop-color="rgb(125,125,125)"/><stop offset="0.8125" stop-color="rgb(102,102,102)"/><stop offset="1.0000" stop-color="rgb(56,56,56)"/></linearGradient><linearGradient id="g25" gradientUnits="userSpaceOnUse" x1="0" y1="487" x2="0" y2="503"><stop offset="0.0000" stop-color="rgb(56,56,56)"/><stop offset="0.1875" stop-color="rgb(94,94,94)"/><stop offset="0.5000" stop-color="rgb(117,117,117)"/><stop offset="0.8125" stop-color="rgb(94,94,94)"/><stop offset="1.0000" stop-color="rgb(56,56,56)"/></linearGradient><linearGradient id="g26" gradientUnits="userSpaceOnUse" x1="0" y1="487" x2="0" y2="503"><stop offset="0.0000" stop-color="rgb(56,56,56)"/><stop offset="0.1875" stop-color="rgb(87,87,87)"/><stop offset="0.5000" stop-color="rgb(110,110,110)"/><stop offset="0.8125" stop-color="rgb(87,87,87)"/><stop offset="1.0000" stop-color="rgb(56,56,56)"/></linearGradient><linearGradient id="g27" gradientUnits="userSpaceOnUse" x1="0" y1="487" x2="0" y2="503"><stop offset="0.0000" stop-color="rgb(46,46,46)"/><stop offset="0.1875" stop-color="rgb(82,82,82)"/><stop offset="0.5000" stop-color="rgb(102,102,102)"/><stop offset="0.8125" stop-color="rgb(82,82,82)"/><stop offset="1.0000" stop-color="rgb(46,46,46)"/></linearGradient><linearGradient id="g28" gradientUnits="userSpaceOnUse" x1="0" y1="510" x2="0" y2="652.5"><stop offset="0.0000" stop-color="rgb(64,64,64)"/><stop offset="0.2105" stop-color="rgb(56,56,56)"/><stop offset="0.5614" stop-color="rgb(61,61,61)"/><stop offset="0.6596" stop-color="rgb(82,82,82)"/><stop offset="0.8912" stop-color="rgb(82,82,82)"/><stop offset="1.0000" stop-color="rgb(71,71,71)"/></linearGradient><linearGradient id="g29" gradientUnits="userSpaceOnUse" x1="0" y1="602" x2="0" y2="638"><stop offset="0.0000" stop-color="rgb(56,56,56)"/><stop offset="0.2222" stop-color="rgb(133,133,133)"/><stop offset="0.5000" stop-color="rgb(153,153,153)"/><stop offset="0.7778" stop-color="rgb(133,133,133)"/><stop offset="1.0000" stop-color="rgb(56,56,56)"/></linearGradient><linearGradient id="g30" gradientUnits="userSpaceOnUse" x1="0" y1="340" x2="0" y2="652.5"><stop offset="0.0000" stop-color="rgb(76,76,76)"/><stop offset="0.1920" stop-color="rgb(84,84,84)"/><stop offset="0.4480" stop-color="rgb(92,92,92)"/><stop offset="0.4704" stop-color="rgb(128,128,128)"/><stop offset="0.5280" stop-color="rgb(102,102,102)"/><stop offset="0.7040" stop-color="rgb(92,92,92)"/><stop offset="1.0000" stop-color="rgb(76,76,76)"/></linearGradient><linearGradient id="g31" gradientUnits="userSpaceOnUse" x1="0" y1="487" x2="0" y2="505"><stop offset="0.0000" stop-color="rgb(128,128,128)"/><stop offset="0.1667" stop-color="rgb(209,209,209)"/><stop offset="0.8333" stop-color="rgb(209,209,209)"/><stop offset="1.0000" stop-color="rgb(115,115,115)"/></linearGradient><linearGradient id="g32" gradientUnits="userSpaceOnUse" x1="0" y1="371" x2="0" y2="623"><stop offset="0.0000" stop-color="rgb(71,71,71)"/><stop offset="0.0476" stop-color="rgb(117,117,117)"/><stop offset="0.1071" stop-color="rgb(163,163,163)"/><stop offset="0.8889" stop-color="rgb(168,168,168)"/><stop offset="0.9405" stop-color="rgb(115,115,115)"/><stop offset="1.0000" stop-color="rgb(51,51,51)"/></linearGradient><linearGradient id="g33" gradientUnits="userSpaceOnUse" x1="0" y1="600" x2="0" y2="652.5"><stop offset="0.0000" stop-color="rgb(76,76,76)"/><stop offset="0.4190" stop-color="rgb(61,61,61)"/><stop offset="0.6476" stop-color="rgb(38,38,38)"/><stop offset="0.8762" stop-color="rgb(15,15,15)"/><stop offset="1.0000" stop-color="rgb(8,8,8)"/></linearGradient><linearGradient id="g34" gradientUnits="userSpaceOnUse" x1="0" y1="371" x2="0" y2="624"><stop offset="0.0000" stop-color="rgb(51,51,51)"/><stop offset="0.0395" stop-color="rgb(76,76,76)"/><stop offset="0.0632" stop-color="rgb(133,133,133)"/><stop offset="0.9051" stop-color="rgb(135,135,135)"/><stop offset="0.9289" stop-color="rgb(115,115,115)"/><stop offset="0.9407" stop-color="rgb(82,82,82)"/><stop offset="0.9802" stop-color="rgb(64,64,64)"/><stop offset="1.0000" stop-color="rgb(31,31,31)"/></linearGradient><linearGradient id="g35" gradientUnits="userSpaceOnUse" x1="0" y1="340" x2="0" y2="386"><stop offset="0.0000" stop-color="rgb(76,76,76)"/><stop offset="0.6957" stop-color="rgb(92,92,92)"/><stop offset="1.0000" stop-color="rgb(115,115,115)"/></linearGradient><linearGradient id="g36" gradientUnits="userSpaceOnUse" x1="0" y1="380" x2="0" y2="609"><stop offset="0.0000" stop-color="rgb(92,92,92)"/><stop offset="0.0349" stop-color="rgb(150,150,150)"/><stop offset="0.9607" stop-color="rgb(150,150,150)"/><stop offset="1.0000" stop-color="rgb(102,102,102)"/></linearGradient><linearGradient id="g37" gradientUnits="userSpaceOnUse" x1="0" y1="607" x2="0" y2="652.5"><stop offset="0.0000" stop-color="rgb(102,102,102)"/><stop offset="0.5055" stop-color="rgb(97,97,97)"/><stop offset="1.0000" stop-color="rgb(87,87,87)"/></linearGradient><filter id="fs" x="346" y="340" width="1156" height="312.5" filterUnits="userSpaceOnUse" color-interpolation-filters="sRGB"><feTurbulence type="fractalNoise" baseFrequency="0.42 0.55" numOctaves="1" seed="3" result="t"/><feColorMatrix in="t" type="matrix" values="-2.6 0 0 0 2.04 -2.6 0 0 0 2.04 -2.6 0 0 0 2.04 0 0 0 0 1" result="n"/><feComposite in="SourceGraphic" in2="n" operator="arithmetic" k1="0.42" k2="0.650" k3="0" k4="0" result="m"/><feComponentTransfer in="m" result="c"><feFuncR type="table" tableValues="0.208 0.212 0.212 0.208 0.196 0.171 0.125 0.059 0.012 0.006 0.017 0.033 0.050 0.063 0.072 0.078 0.079 0.075 0.064 0.049 0.034 0.026 0.024 0.023 0.023 0.027 0.038 0.059 0.084 0.113 0.145 0.180 0.218 0.259 0.302 0.348 0.395 0.442 0.487 0.530 0.571 0.610 0.647 0.683 0.718 0.752 0.786 0.819 0.851 0.882 0.914 0.945 0.974 0.994 0.999 0.996 0.988 0.979 0.970 0.963 0.959 0.960 0.966 0.976"/><feFuncG type="table" tableValues="0.166 0.190 0.214 0.239 0.265 0.292 0.324 0.360 0.388 0.409 0.427 0.443 0.459 0.474 0.489 0.504 0.520 0.537 0.557 0.577 0.597 0.614 0.629 0.642 0.653 0.664 0.674 0.684 0.693 0.702 0.710 0.718 0.725 0.732 0.738 0.742 0.746 0.748 0.749 0.749 0.749 0.747 0.746 0.744 0.741 0.738 0.736 0.733 0.730 0.727 0.726 0.726 0.731 0.746 0.765 0.786 0.807 0.827 0.848 0.871 0.895 0.922 0.951 0.983"/><feFuncB type="table" tableValues="0.529 0.578 0.627 0.677 0.728 0.779 0.830 0.868 0.882 0.883 0.879 0.872 0.864 0.855 0.847 0.838 0.831 0.826 0.824 0.823 0.820 0.814 0.804 0.791 0.777 0.761 0.744 0.725 0.706 0.686 0.665 0.642 0.619 0.595 0.571 0.547 0.524 0.503 0.484 0.466 0.449 0.434 0.419 0.404 0.391 0.377 0.363 0.350 0.336 0.322 0.306 0.289 0.267 0.240 0.216 0.197 0.179 0.163 0.147 0.131 0.113 0.095 0.075 0.054"/></feComponentTransfer><feComposite in="c" in2="SourceGraphic" operator="in"/></filter><filter id="fs2" x="346" y="340" width="1156" height="312.5" filterUnits="userSpaceOnUse" color-interpolation-filters="sRGB"><feTurbulence type="fractalNoise" baseFrequency="0.55 0.22" numOctaves="1" seed="5" result="t"/><feColorMatrix in="t" type="matrix" values="-3.2 0 0 0 2.088 -3.2 0 0 0 2.088 -3.2 0 0 0 2.088 0 0 0 0 1" result="n"/><feComposite in="SourceGraphic" in2="n" operator="arithmetic" k1="0.85" k2="0.168" k3="0" k4="0" result="m"/><feComponentTransfer in="m" result="c"><feFuncR type="table" tableValues="0.208 0.212 0.212 0.208 0.196 0.171 0.125 0.059 0.012 0.006 0.017 0.033 0.050 0.063 0.072 0.078 0.079 0.075 0.064 0.049 0.034 0.026 0.024 0.023 0.023 0.027 0.038 0.059 0.084 0.113 0.145 0.180 0.218 0.259 0.302 0.348 0.395 0.442 0.487 0.530 0.571 0.610 0.647 0.683 0.718 0.752 0.786 0.819 0.851 0.882 0.914 0.945 0.974 0.994 0.999 0.996 0.988 0.979 0.970 0.963 0.959 0.960 0.966 0.976"/><feFuncG type="table" tableValues="0.166 0.190 0.214 0.239 0.265 0.292 0.324 0.360 0.388 0.409 0.427 0.443 0.459 0.474 0.489 0.504 0.520 0.537 0.557 0.577 0.597 0.614 0.629 0.642 0.653 0.664 0.674 0.684 0.693 0.702 0.710 0.718 0.725 0.732 0.738 0.742 0.746 0.748 0.749 0.749 0.749 0.747 0.746 0.744 0.741 0.738 0.736 0.733 0.730 0.727 0.726 0.726 0.731 0.746 0.765 0.786 0.807 0.827 0.848 0.871 0.895 0.922 0.951 0.983"/><feFuncB type="table" tableValues="0.529 0.578 0.627 0.677 0.728 0.779 0.830 0.868 0.882 0.883 0.879 0.872 0.864 0.855 0.847 0.838 0.831 0.826 0.824 0.823 0.820 0.814 0.804 0.791 0.777 0.761 0.744 0.725 0.706 0.686 0.665 0.642 0.619 0.595 0.571 0.547 0.524 0.503 0.484 0.466 0.449 0.434 0.419 0.404 0.391 0.377 0.363 0.350 0.336 0.322 0.306 0.289 0.267 0.240 0.216 0.197 0.179 0.163 0.147 0.131 0.113 0.095 0.075 0.054"/></feComponentTransfer><feComposite in="c" in2="SourceGraphic" operator="in"/></filter><filter id="fn" x="346" y="340" width="1156" height="312.5" filterUnits="userSpaceOnUse" color-interpolation-filters="sRGB"><feTurbulence type="fractalNoise" baseFrequency="0.55 0.24" numOctaves="1" seed="11" result="t"/><feColorMatrix in="t" type="matrix" values="1 0 0 0 0 1 0 0 0 0 1 0 0 0 0 0 0 0 0 1" result="n"/><feComposite in="SourceGraphic" in2="n" operator="arithmetic" k1="0" k2="6.0" k3="5.5" k4="-4.0" result="m1"/><feComposite in="SourceGraphic" in2="m1" operator="arithmetic" k1="1.2" k2="0" k3="0" k4="0.0" result="m"/><feComponentTransfer in="m" result="c"><feFuncR type="table" tableValues="0.208 0.212 0.212 0.208 0.196 0.171 0.125 0.059 0.012 0.006 0.017 0.033 0.050 0.063 0.072 0.078 0.079 0.075 0.064 0.049 0.034 0.026 0.024 0.023 0.023 0.027 0.038 0.059 0.084 0.113 0.145 0.180 0.218 0.259 0.302 0.348 0.395 0.442 0.487 0.530 0.571 0.610 0.647 0.683 0.718 0.752 0.786 0.819 0.851 0.882 0.914 0.945 0.974 0.994 0.999 0.996 0.988 0.979 0.970 0.963 0.959 0.960 0.966 0.976"/><feFuncG type="table" tableValues="0.166 0.190 0.214 0.239 0.265 0.292 0.324 0.360 0.388 0.409 0.427 0.443 0.459 0.474 0.489 0.504 0.520 0.537 0.557 0.577 0.597 0.614 0.629 0.642 0.653 0.664 0.674 0.684 0.693 0.702 0.710 0.718 0.725 0.732 0.738 0.742 0.746 0.748 0.749 0.749 0.749 0.747 0.746 0.744 0.741 0.738 0.736 0.733 0.730 0.727 0.726 0.726 0.731 0.746 0.765 0.786 0.807 0.827 0.848 0.871 0.895 0.922 0.951 0.983"/><feFuncB type="table" tableValues="0.529 0.578 0.627 0.677 0.728 0.779 0.830 0.868 0.882 0.883 0.879 0.872 0.864 0.855 0.847 0.838 0.831 0.826 0.824 0.823 0.820 0.814 0.804 0.791 0.777 0.761 0.744 0.725 0.706 0.686 0.665 0.642 0.619 0.595 0.571 0.547 0.524 0.503 0.484 0.466 0.449 0.434 0.419 0.404 0.391 0.377 0.363 0.350 0.336 0.322 0.306 0.289 0.267 0.240 0.216 0.197 0.179 0.163 0.147 0.131 0.113 0.095 0.075 0.054"/></feComponentTransfer><feComposite in="c" in2="SourceGraphic" operator="in"/></filter></defs><rect x="346" y="340" width="1156" height="312.5" fill="#352a87"/><g filter="url(#fn)"><rect x="528" y="345" width="58.0" height="9.0" fill="rgb(22,22,22)"/><rect x="528" y="638" width="58.0" height="10.0" fill="rgb(22,22,22)"/><rect x="786" y="470" width="34.0" height="182.5" fill="url(#g10)"/><rect x="939" y="345" width="49.0" height="307.5" fill="url(#g14)"/><rect x="1098" y="345" width="268.0" height="307.5" fill="url(#g21)"/><rect x="1181" y="510" width="49.0" height="142.5" fill="url(#g28)"/><rect x="1402" y="600" width="100.0" height="52.5" fill="url(#g33)"/></g><g filter="url(#fs2)"><rect x="1292" y="340" width="28.0" height="312.5" fill="url(#g30)"/><rect x="1446" y="340" width="26.0" height="46.0" fill="url(#g35)"/><rect x="1446" y="607" width="26.0" height="45.5" fill="url(#g37)"/></g><g filter="url(#fs)"><polygon points="373,374 386,374 387,385 387,619 375,619 372,606 372,390" fill="url(#g1)"/><rect x="372" y="400" width="2.5" height="200.0" fill="url(#g2)" opacity="0.6"/><rect x="526" y="364" width="61.5" height="262.0" fill="url(#g3)"/><rect x="526" y="426.5" width="61.5" height="3.0" fill="rgb(107,107,107)" opacity="0.5"/><rect x="526" y="495.0" width="61.5" height="3.0" fill="rgb(107,107,107)" opacity="0.5"/><rect x="526" y="562.5" width="61.5" height="3.0" fill="rgb(107,107,107)" opacity="0.5"/><rect x="566.5" y="364" width="1.0" height="262.0" fill="rgb(51,51,51)" opacity="0.3"/><rect x="600" y="372" width="13.0" height="250.0" fill="url(#g4)"/><rect x="600" y="380" width="2.5" height="235.0" fill="rgb(56,56,56)" opacity="0.8"/><rect x="623" y="340" width="15.0" height="158.0" fill="url(#g5)"/><rect x="623" y="340" width="2.5" height="150.0" fill="rgb(64,64,64)" opacity="0.7"/><rect x="623" y="642" width="15.0" height="10.5" fill="url(#g6)"/><rect x="693" y="340" width="12.0" height="12.0" fill="url(#g7)"/><rect x="693" y="619" width="12.0" height="33.5" fill="url(#g8)"/><rect x="693" y="619" width="2.0" height="33.5" fill="rgb(64,64,64)" opacity="0.7"/><polygon points="760,374 772,374 772,610 769,615 760,597" fill="url(#g9)"/><rect x="760" y="385" width="2.5" height="215.0" fill="rgb(51,51,51)" opacity="0.8"/><rect x="789" y="487" width="28.0" height="19.0" fill="url(#g11)"/><rect x="786" y="612" width="34.0" height="17.0" fill="url(#g12)"/><rect x="870" y="340" width="60.0" height="312.5" fill="url(#g13)"/><rect x="870" y="427" width="60.0" height="3.0" fill="rgb(140,140,140)" opacity="0.6"/><rect x="870" y="494" width="60.0" height="3.0" fill="rgb(158,158,158)" opacity="0.5"/><rect x="939" y="476" width="49.0" height="38.0" fill="url(#g15)"/><rect x="1003" y="340" width="64.0" height="312.5" fill="url(#g16)"/><rect x="1003" y="364" width="3.0" height="266.0" fill="rgb(76,76,76)" opacity="0.8"/><rect x="1003" y="427" width="64.0" height="2.5" fill="rgb(128,128,128)" opacity="0.6"/><rect x="1003" y="494" width="64.0" height="2.5" fill="rgb(158,158,158)" opacity="0.5"/><rect x="1046" y="364" width="1.0" height="266.0" fill="rgb(115,115,115)" opacity="0.3"/><polygon points="1069,375 1080,375 1080,598 1077.5,618 1069,588" fill="url(#g17)"/><rect x="975" y="540" width="28.0" height="38.0" fill="url(#g18)"/><rect x="1067" y="540" width="28.0" height="38.0" fill="url(#g19)"/><rect x="1003" y="549" width="64.0" height="21.0" fill="url(#g20)"/><rect x="1079.5" y="540" width="3.0" height="16.0" fill="rgb(0,0,0)" opacity="1"/><rect x="1079.5" y="562" width="3.0" height="16.0" fill="rgb(0,0,0)" opacity="1"/><rect x="1098" y="487" width="97.0" height="16.0" fill="url(#g22)"/><rect x="1195" y="487" width="25.0" height="16.0" fill="url(#g23)"/><rect x="1220" y="487" width="25.0" height="16.0" fill="url(#g24)"/><rect x="1245" y="487" width="25.0" height="16.0" fill="url(#g25)"/><rect x="1270" y="487" width="22.0" height="16.0" fill="url(#g26)"/><rect x="1320" y="487" width="46.0" height="16.0" fill="url(#g27)"/><rect x="1181" y="602" width="49.0" height="36.0" fill="url(#g29)"/><rect x="1292" y="487" width="28.0" height="18.0" fill="url(#g31)"/><rect x="1367" y="371" width="13.0" height="252.0" fill="url(#g32)"/><rect x="1367" y="371" width="2.0" height="252.0" fill="rgb(76,76,76)" opacity="0.7"/><rect x="1402" y="371" width="100.0" height="253.0" fill="url(#g34)"/><rect x="1402" y="371" width="3.0" height="249.0" fill="rgb(76,76,76)" opacity="0.7"/><rect x="1446" y="380" width="26.0" height="229.0" fill="url(#g36)"/><rect x="1402" y="494" width="100.0" height="2.5" fill="rgb(97,97,97)" opacity="0.6"/></g><path d="M346.5 652.5V340.5H1502" stroke="#1a1a1a" stroke-width="1" fill="none"/><path d="M346 652.0H1502" stroke="#1a1a1a" stroke-width="1" fill="none"/><g><rect x="1355.5" y="347.5" width="144.5" height="24" rx="1.5" fill="#ffffff" fill-opacity="0.36"/><path d="M1379.5 347.5v24" stroke="#8f88c0" stroke-width="1" opacity="0.55"/><path d="M1403.5 347.5v24" stroke="#8f88c0" stroke-width="1" opacity="0.55"/><path d="M1427.5 347.5v24" stroke="#8f88c0" stroke-width="1" opacity="0.55"/><path d="M1451.5 347.5v24" stroke="#8f88c0" stroke-width="1" opacity="0.55"/><path d="M1475.5 347.5v24" stroke="#8f88c0" stroke-width="1" opacity="0.55"/><g opacity="0.45" stroke="#3a3170" fill="none" stroke-width="1"><path d="M1360.5 366.5V355.5L1364.5 351.5L1368.5 355.5V366.5Z"/><path d="M1363 364L1364.7 358.5L1366.5 364M1363.6 362.3H1366"/><rect x="1369.500" y="360.5" width="7" height="6"/><path d="M1373 360.5v6M1369.5 363.5h7"/></g><path d="M1384.5 351.5L1386 364L1389.5 360.5L1394.5 367L1396.5 365.5L1391.5 359L1396 358Z" fill="none" stroke="#3a3170" stroke-width="1.1" opacity="0.6"/><g opacity="0.55"><rect x="1406.5" y="351.5" width="17" height="16" fill="none" stroke="#3a3170" stroke-width="1"/><rect x="1407" y="352" width="16" height="4" fill="#3a3170"/><rect x="1407" y="363" width="16" height="4" fill="#3a3170"/><path d="M1409 359.5H1421M1411.5 357L1409 359.500L1411.500 362M1418.500 357L1421 359.500L1418.500 362" fill="none" stroke="#3a3170" stroke-width="1"/></g><path d="M1431.500 356V351.500H1436M1442.500 351.500H1447V356M1447 362.500V367H1442.500M1436 367H1431.500V362.500" fill="none" stroke="#3a3170" stroke-width="1.2" opacity="0.6"/><path d="M1459 367C1456.500 364 1455.500 361.500 1456.500 360.500C1457.500 359.800 1458.500 361 1459.300 362V354.500C1459.300 353 1461.300 353 1461.300 354.500V353.200C1461.300 351.800 1463.300 351.800 1463.300 353.200V354C1463.300 352.700 1465.300 352.700 1465.300 354V355.500C1465.300 354.300 1467.200 354.300 1467.200 355.500V362C1467.200 364.500 1466.500 366 1465.500 367Z" fill="none" stroke="#3a3170" stroke-width="1" opacity="0.5"/><g opacity="0.75" stroke="#3a3170" fill="none" stroke-width="1.2"><circle cx="1485" cy="357.500" r="5"/><path d="M1482.500 357.500H1487.500M1485 355V360M1488.700 361.200L1493.500 366"/></g></g></svg>
<div style="position:absolute;top:656.0px;height:17px;line-height:17px;font-size:13px;color:#262626;white-space:nowrap;left:342.9px;">0</div>
<div style="position:absolute;top:656.0px;height:17px;line-height:17px;font-size:13px;color:#262626;white-space:nowrap;left:414.4px;">0.3</div>
<div style="position:absolute;top:656.0px;height:17px;line-height:17px;font-size:13px;color:#262626;white-space:nowrap;left:491.3px;">0.6</div>
<div style="position:absolute;top:656.0px;height:17px;line-height:17px;font-size:13px;color:#262626;white-space:nowrap;left:568.2px;">0.9</div>
<div style="position:absolute;top:656.0px;height:17px;line-height:17px;font-size:13px;color:#262626;white-space:nowrap;left:645.1px;">1.2</div>
<div style="position:absolute;top:656.0px;height:17px;line-height:17px;font-size:13px;color:#262626;white-space:nowrap;left:722.1px;">1.5</div>
<div style="position:absolute;top:656.0px;height:17px;line-height:17px;font-size:13px;color:#262626;white-space:nowrap;left:799.0px;">1.8</div>
<div style="position:absolute;top:656.0px;height:17px;line-height:17px;font-size:13px;color:#262626;white-space:nowrap;left:875.9px;">2.1</div>
<div style="position:absolute;top:656.0px;height:17px;line-height:17px;font-size:13px;color:#262626;white-space:nowrap;left:952.8px;">2.4</div>
<div style="position:absolute;top:656.0px;height:17px;line-height:17px;font-size:13px;color:#262626;white-space:nowrap;left:1029.7px;">2.7</div>
<div style="position:absolute;top:656.0px;height:17px;line-height:17px;font-size:13px;color:#262626;white-space:nowrap;left:1112.1px;">3</div>
<div style="position:absolute;top:656.0px;height:17px;line-height:17px;font-size:13px;color:#262626;white-space:nowrap;left:1183.6px;">3.3</div>
<div style="position:absolute;top:656.0px;height:17px;line-height:17px;font-size:13px;color:#262626;white-space:nowrap;left:1260.5px;">3.6</div>
<div style="position:absolute;top:656.0px;height:17px;line-height:17px;font-size:13px;color:#262626;white-space:nowrap;left:1337.4px;">3.9</div>
<div style="position:absolute;top:656.0px;height:17px;line-height:17px;font-size:13px;color:#262626;white-space:nowrap;left:1414.3px;">4.2</div>
<div style="position:absolute;top:337.0px;height:17px;line-height:17px;font-size:13px;color:#262626;white-space:nowrap;left:326.5px;">12</div>
<div style="position:absolute;top:387.0px;height:17px;line-height:17px;font-size:13px;color:#262626;white-space:nowrap;left:333.8px;">8</div>
<div style="position:absolute;top:437.0px;height:17px;line-height:17px;font-size:13px;color:#262626;white-space:nowrap;left:333.8px;">4</div>
<div style="position:absolute;top:487.0px;height:17px;line-height:17px;font-size:13px;color:#262626;white-space:nowrap;left:333.8px;">0</div>
<div style="position:absolute;top:537.0px;height:17px;line-height:17px;font-size:13px;color:#262626;white-space:nowrap;left:329.4px;">-4</div>
<div style="position:absolute;top:587.0px;height:17px;line-height:17px;font-size:13px;color:#262626;white-space:nowrap;left:329.4px;">-8</div>
<div style="position:absolute;top:637.0px;height:17px;line-height:17px;font-size:13px;color:#262626;white-space:nowrap;left:322.2px;">-12</div>
<div style="position:absolute;top:673.5px;height:19px;line-height:19px;font-size:15px;color:#262626;white-space:nowrap;left:890.0px;">Time (ms)</div>
<div style="position:absolute;left:249.1px;top:485.5px;height:19px;line-height:19px;font-size:15px;color:#262626;white-space:nowrap;transform:rotate(-90deg);transform-origin:50% 50%">Frequency (MHz)</div>
<div style="position:absolute;left:320px;top:720px;width:1181px;height:12px;background:#515151"></div>
<div style="position:absolute;left:335px;top:732px;width:1166px;height:46px;background:#fff"></div>
<div style="position:absolute;left:336px;top:744px;width:1164px;height:12px;background:#f6f6f6"></div>
<div style="position:absolute;left:328px;top:732px;width:7px;height:46px;background:#858585"></div>
<svg style="position:absolute;left:293px;top:715px" width="1227" height="70" viewBox="293 715 1227 70"><path d="M335.5 778v-6M335.5 720v6M361.5 778v-4M361.5 720v4M387.5 778v-4M387.5 720v4M413.5 778v-6M413.5 720v6M439.5 778v-4M439.5 720v4M464.5 778v-4M464.5 720v4M490.5 778v-6M490.5 720v6M516.5 778v-4M516.5 720v4M542.5 778v-4M542.5 720v4M568.5 778v-6M568.5 720v6M594.5 778v-4M594.5 720v4M620.5 778v-4M620.5 720v4M646.5 778v-6M646.5 720v6M671.5 778v-4M671.5 720v4M697.5 778v-4M697.5 720v4M723.5 778v-6M723.5 720v6M749.5 778v-4M749.5 720v4M775.5 778v-4M775.5 720v4M801.5 778v-6M801.5 720v6M827.5 778v-4M827.5 720v4M853.5 778v-4M853.5 720v4M878.5 778v-6M878.5 720v6M904.5 778v-4M904.5 720v4M930.5 778v-4M930.5 720v4M956.5 778v-6M956.5 720v6M982.5 778v-4M982.5 720v4M1008.5 778v-4M1008.5 720v4M1034.5 778v-6M1034.5 720v6M1060.5 778v-4M1060.5 720v4M1086.5 778v-4M1086.5 720v4M1111.5 778v-6M1111.5 720v6M1137.5 778v-4M1137.5 720v4M1163.5 778v-4M1163.5 720v4M1189.5 778v-6M1189.5 720v6M1215.5 778v-4M1215.5 720v4M1241.5 778v-4M1241.5 720v4M1267.5 778v-6M1267.5 720v6M1293.5 778v-4M1293.5 720v4M1318.5 778v-4M1318.5 720v4M1344.5 778v-6M1344.5 720v6M1370.5 778v-4M1370.5 720v4M1396.5 778v-4M1396.5 720v4M1422.5 778v-6M1422.5 720v6M1448.5 778v-4M1448.5 720v4M1474.5 778v-4M1474.5 720v4M1500.5 778v-6M1500.5 720v6" stroke="#1a1a1a" stroke-width="1"/><path d="M335 778.5H1501" stroke="#1a1a1a" stroke-width="1"/></svg>
<div style="position:absolute;left:323px;top:721px;width:45px;height:9px;background:#515151"></div>
<div style="position:absolute;top:718.0px;height:14px;line-height:14px;font-size:10px;color:#fff;white-space:nowrap;left:324.5px;transform:scaleX(1.007);transform-origin:0 50%;">RFFrame</div>
<div style="position:absolute;top:781.8px;height:17px;line-height:17px;font-size:13px;color:#262626;white-space:nowrap;left:331.9px;">0</div>
<div style="position:absolute;top:781.8px;height:17px;line-height:17px;font-size:13px;color:#262626;white-space:nowrap;left:404.1px;">0.3</div>
<div style="position:absolute;top:781.8px;height:17px;line-height:17px;font-size:13px;color:#262626;white-space:nowrap;left:481.7px;">0.6</div>
<div style="position:absolute;top:781.8px;height:17px;line-height:17px;font-size:13px;color:#262626;white-space:nowrap;left:559.4px;">0.9</div>
<div style="position:absolute;top:781.8px;height:17px;line-height:17px;font-size:13px;color:#262626;white-space:nowrap;left:637.0px;">1.2</div>
<div style="position:absolute;top:781.8px;height:17px;line-height:17px;font-size:13px;color:#262626;white-space:nowrap;left:714.7px;">1.5</div>
<div style="position:absolute;top:781.8px;height:17px;line-height:17px;font-size:13px;color:#262626;white-space:nowrap;left:792.3px;">1.8</div>
<div style="position:absolute;top:781.8px;height:17px;line-height:17px;font-size:13px;color:#262626;white-space:nowrap;left:869.9px;">2.1</div>
<div style="position:absolute;top:781.8px;height:17px;line-height:17px;font-size:13px;color:#262626;white-space:nowrap;left:947.6px;">2.4</div>
<div style="position:absolute;top:781.8px;height:17px;line-height:17px;font-size:13px;color:#262626;white-space:nowrap;left:1025.2px;">2.7</div>
<div style="position:absolute;top:781.8px;height:17px;line-height:17px;font-size:13px;color:#262626;white-space:nowrap;left:1108.3px;">3</div>
<div style="position:absolute;top:781.8px;height:17px;line-height:17px;font-size:13px;color:#262626;white-space:nowrap;left:1180.5px;">3.3</div>
<div style="position:absolute;top:781.8px;height:17px;line-height:17px;font-size:13px;color:#262626;white-space:nowrap;left:1258.1px;">3.6</div>
<div style="position:absolute;top:781.8px;height:17px;line-height:17px;font-size:13px;color:#262626;white-space:nowrap;left:1335.8px;">3.9</div>
<div style="position:absolute;top:781.8px;height:17px;line-height:17px;font-size:13px;color:#262626;white-space:nowrap;left:1413.4px;">4.2</div>
<div style="position:absolute;top:798.8px;height:19px;line-height:19px;font-size:15px;color:#262626;white-space:nowrap;left:884.5px;">Time (ms)</div>
</body></html>
